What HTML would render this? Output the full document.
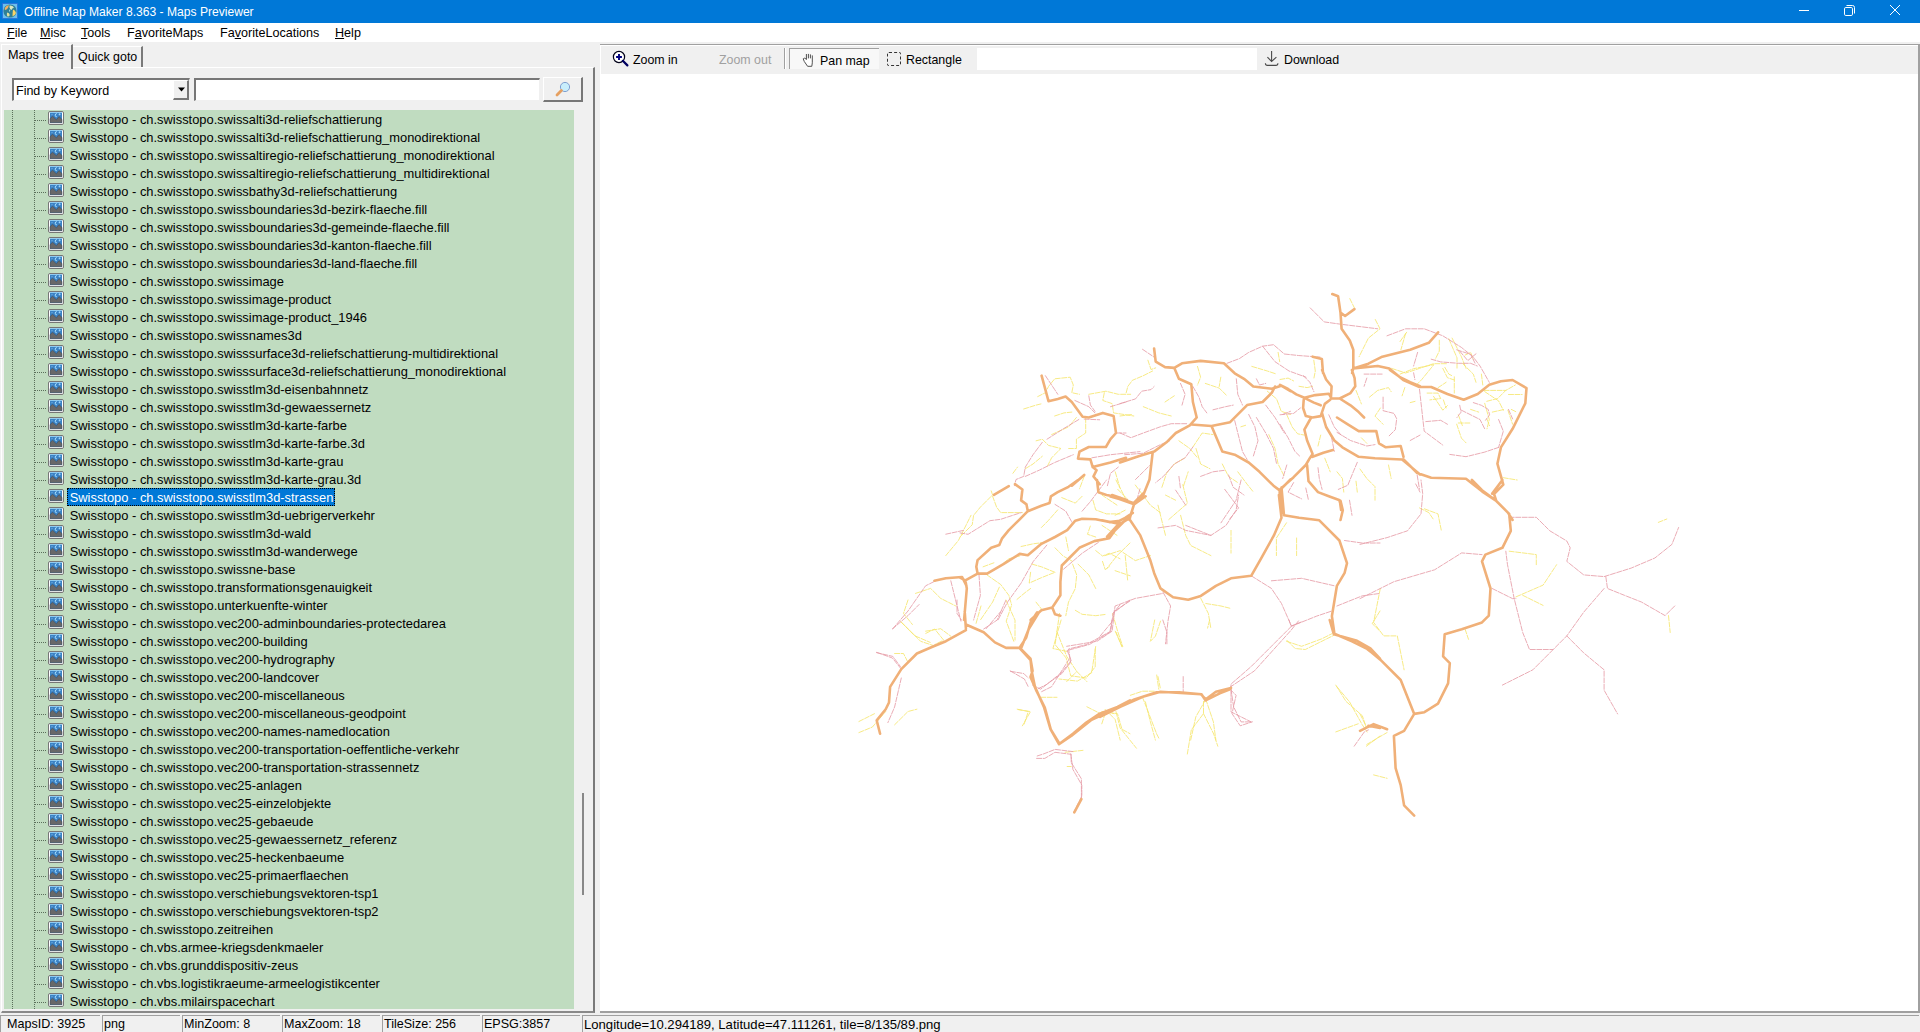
<!DOCTYPE html>
<html><head><meta charset="utf-8">
<style>
*{margin:0;padding:0;box-sizing:border-box}
html,body{width:1920px;height:1032px;overflow:hidden;background:#f0f0f0;font-family:"Liberation Sans",sans-serif;color:#000}
.a{position:absolute}
.tb{position:absolute;left:0;top:0;width:1920px;height:23px;background:#0078d7}
.ttl{position:absolute;left:24px;top:5px;font-size:12.1px;color:#fff;white-space:nowrap;line-height:14px}
.menu{position:absolute;left:0;top:23px;width:1920px;height:19px;background:#fff}
.mi{position:absolute;top:2px;font-size:12.6px;line-height:17px;white-space:nowrap}
.mi u{text-decoration:underline;text-underline-offset:0.5px;text-decoration-thickness:1px}
.t{position:absolute;left:67px;height:18px;font-size:12.9px;line-height:20px;white-space:nowrap;padding:0 2px 0 2.7px}
.t.sel{background:#0078d7;color:#fff;outline:1px dotted #000;outline-offset:-1px}
.ic{position:absolute;left:48px;width:16px;height:15px}
.hd{position:absolute;left:35px;width:12px;height:1px;background-image:linear-gradient(90deg,#5a6e5a 50%,transparent 50%);background-size:2px 1px}
.vd{position:absolute;width:1px;background-image:linear-gradient(180deg,#5a6e5a 50%,transparent 50%);background-size:1px 2px}
.sp{position:absolute;top:1015px;height:17px;border-top:1px solid #a0a0a0;border-left:1px solid #a0a0a0;font-size:12.55px;line-height:17px;white-space:nowrap;padding-left:1px}
.tbt{position:absolute;font-size:12.4px;line-height:15px;white-space:nowrap}
</style></head><body>
<div class="tb"></div>
<svg class="a" style="left:2px;top:3px" width="16" height="16" viewBox="0 0 16 16"><rect x="0.5" y="0.5" width="15" height="15" fill="#6cc0ee" stroke="#2a6fd8" stroke-width="0.8"/><circle cx="8" cy="8" r="6.6" fill="#2f7f96"/><path d="M2.5 6 Q3.5 2.5 7 2.3 Q6.5 5 4.5 6.5 Q3.5 7.5 2.5 6Z" fill="#f0b062"/><path d="M7.5 2.5 Q10.5 2.2 12 4.5 Q10 5 9.5 7 Q8 6.5 7.5 4.5Z" fill="#d8e8c0"/><path d="M11 6.5 Q13.5 7 14 10 Q13 13 10.5 13.5 Q10.5 10 11 6.5Z" fill="#f8d468"/><path d="M5 9.5 Q7.5 9.5 7.8 12 Q7 14 5.5 13.5 Q4.5 11.5 5 9.5Z" fill="#e0e0a0"/><path d="M7.5 6 Q9 8 7.5 9 Q6.5 8 7.5 6Z" fill="#9fd8e8"/></svg>
<div class="ttl">Offline Map Maker 8.363 - Maps Previewer</div>
<svg class="a" style="left:1790px;top:0" width="130" height="22"><line x1="9" y1="10.5" x2="19" y2="10.5" stroke="#fff" stroke-width="1"/><rect x="54.5" y="7.5" width="8" height="8" rx="1.3" fill="none" stroke="#fff"/><path d="M56.5 5.5 H62.5 Q64.5 5.5 64.5 7.5 V13.5" fill="none" stroke="#fff"/><path d="M100 5 L110 15 M110 5 L100 15" stroke="#fff" stroke-width="1"/></svg>
<div class="menu"></div>
<div class="mi" style="left:7px;top:25px"><u>F</u>ile</div>
<div class="mi" style="left:40px;top:25px"><u>M</u>isc</div>
<div class="mi" style="left:81px;top:25px"><u>T</u>ools</div>
<div class="mi" style="left:127px;top:25px">F<u>a</u>voriteMaps</div>
<div class="mi" style="left:220px;top:25px">Fa<u>v</u>oriteLocations</div>
<div class="mi" style="left:335px;top:25px"><u>H</u>elp</div>

<!-- left tab panel -->
<div class="a" style="left:1px;top:67px;width:594px;height:946px;border-left:1px solid #fff;border-top:1px solid #fff;border-right:2px solid #7a7a7a;border-bottom:2px solid #8a8a8a;background:#f0f0f0"></div>
<div class="a" style="left:1px;top:44px;width:72px;height:25px;background:#f0f0f0;border-left:1px solid #fff;border-top:1px solid #fff;border-right:2px solid #7a7a7a"></div>
<div class="a" style="left:8px;top:47.5px;font-size:12.65px;line-height:15px">Maps tree</div>
<div class="a" style="left:73px;top:46px;width:70px;height:21px;border-top:1px solid #fff;border-right:2px solid #7a7a7a"></div>
<div class="a" style="left:78px;top:50px;font-size:12.4px;line-height:15px">Quick goto</div>

<div class="a" style="left:12px;top:78px;width:178px;height:23px;background:#fff;border-top:2px solid #777;border-left:2px solid #777;border-right:1px solid #f0f0f0;border-bottom:1px solid #f0f0f0"></div>
<div class="a" style="left:16px;top:84px;font-size:12.5px;line-height:15px">Find by Keyword</div>
<div class="a" style="left:173px;top:80px;width:16px;height:20px;background:#f0f0f0;border-top:1px solid #fff;border-left:1px solid #fff;border-right:2px solid #777;border-bottom:2px solid #777"></div>
<svg class="a" style="left:178px;top:87px" width="8" height="6"><path d="M0 0.5 H7 L3.5 4.5Z" fill="#000"/></svg>
<div class="a" style="left:194px;top:78px;width:346px;height:23px;background:#fff;border-top:2px solid #777;border-left:2px solid #777;border-right:1px solid #f0f0f0;border-bottom:1px solid #f0f0f0"></div>
<div class="a" style="left:543px;top:77px;width:40px;height:25px;background:#f0f0f0;border-top:1px solid #fff;border-left:1px solid #fff;border-right:2px solid #777;border-bottom:2px solid #777"></div>
<svg class="a" style="left:554px;top:81px" width="18" height="17"><circle cx="11" cy="6" r="4.6" fill="#c8eefc" stroke="#7f9fd0" stroke-width="1"/><line x1="7.4" y1="9.6" x2="3" y2="14" stroke="#e6a060" stroke-width="2.8" stroke-linecap="round"/></svg>

<div class="a" style="left:4px;top:110px;width:570px;height:899px;background:#c0dcc0"></div>
<div class="vd" style="left:12px;top:110px;height:899px"></div>
<div class="vd" style="left:34px;top:110px;height:899px"></div>
<div class="a" style="left:574px;top:110px;width:19px;height:899px;background:#f0f0f0"></div>
<div class="a" style="left:582px;top:793px;width:2px;height:102px;background:#888"></div>
<div class="a" style="left:48px;top:111px;width:16px;height:15px"><svg width="16" height="15" viewBox="0 0 16 15"><rect x="0.5" y="0.5" width="15" height="13" rx="1.5" fill="#fff" stroke="#767676"/><rect x="2" y="1" width="12" height="10.8" fill="#3a82c4"/><rect x="2" y="1" width="12" height="0.9" fill="#9ad4f6"/><path d="M2 11.8 V7.6 L4.6 5.2 L8.4 8.8 L11 5.6 L14 8.4 V11.8Z" fill="#686868" stroke="#34465a" stroke-width="0.5"/><path d="M4 3.2 L4.6 3.8 L4 4.4 L3.4 3.8Z" fill="#a8dcff"/><path d="M8.8 2.6 A1.6 1.6 0 1 0 8.8 5.8" stroke="#a8e0ff" stroke-width="1" fill="none"/><path d="M11.6 2.3 V4.3 M10.6 3.3 H12.6" stroke="#a8dcff" stroke-width="0.8"/></svg></div><div class="hd" style="top:120px"></div><div class="t" style="top:110px">Swisstopo - ch.swisstopo.swissalti3d-reliefschattierung</div>
<div class="a" style="left:48px;top:129px;width:16px;height:15px"><svg width="16" height="15" viewBox="0 0 16 15"><rect x="0.5" y="0.5" width="15" height="13" rx="1.5" fill="#fff" stroke="#767676"/><rect x="2" y="1" width="12" height="10.8" fill="#3a82c4"/><rect x="2" y="1" width="12" height="0.9" fill="#9ad4f6"/><path d="M2 11.8 V7.6 L4.6 5.2 L8.4 8.8 L11 5.6 L14 8.4 V11.8Z" fill="#686868" stroke="#34465a" stroke-width="0.5"/><path d="M4 3.2 L4.6 3.8 L4 4.4 L3.4 3.8Z" fill="#a8dcff"/><path d="M8.8 2.6 A1.6 1.6 0 1 0 8.8 5.8" stroke="#a8e0ff" stroke-width="1" fill="none"/><path d="M11.6 2.3 V4.3 M10.6 3.3 H12.6" stroke="#a8dcff" stroke-width="0.8"/></svg></div><div class="hd" style="top:138px"></div><div class="t" style="top:128px">Swisstopo - ch.swisstopo.swissalti3d-reliefschattierung_monodirektional</div>
<div class="a" style="left:48px;top:147px;width:16px;height:15px"><svg width="16" height="15" viewBox="0 0 16 15"><rect x="0.5" y="0.5" width="15" height="13" rx="1.5" fill="#fff" stroke="#767676"/><rect x="2" y="1" width="12" height="10.8" fill="#3a82c4"/><rect x="2" y="1" width="12" height="0.9" fill="#9ad4f6"/><path d="M2 11.8 V7.6 L4.6 5.2 L8.4 8.8 L11 5.6 L14 8.4 V11.8Z" fill="#686868" stroke="#34465a" stroke-width="0.5"/><path d="M4 3.2 L4.6 3.8 L4 4.4 L3.4 3.8Z" fill="#a8dcff"/><path d="M8.8 2.6 A1.6 1.6 0 1 0 8.8 5.8" stroke="#a8e0ff" stroke-width="1" fill="none"/><path d="M11.6 2.3 V4.3 M10.6 3.3 H12.6" stroke="#a8dcff" stroke-width="0.8"/></svg></div><div class="hd" style="top:156px"></div><div class="t" style="top:146px">Swisstopo - ch.swisstopo.swissaltiregio-reliefschattierung_monodirektional</div>
<div class="a" style="left:48px;top:165px;width:16px;height:15px"><svg width="16" height="15" viewBox="0 0 16 15"><rect x="0.5" y="0.5" width="15" height="13" rx="1.5" fill="#fff" stroke="#767676"/><rect x="2" y="1" width="12" height="10.8" fill="#3a82c4"/><rect x="2" y="1" width="12" height="0.9" fill="#9ad4f6"/><path d="M2 11.8 V7.6 L4.6 5.2 L8.4 8.8 L11 5.6 L14 8.4 V11.8Z" fill="#686868" stroke="#34465a" stroke-width="0.5"/><path d="M4 3.2 L4.6 3.8 L4 4.4 L3.4 3.8Z" fill="#a8dcff"/><path d="M8.8 2.6 A1.6 1.6 0 1 0 8.8 5.8" stroke="#a8e0ff" stroke-width="1" fill="none"/><path d="M11.6 2.3 V4.3 M10.6 3.3 H12.6" stroke="#a8dcff" stroke-width="0.8"/></svg></div><div class="hd" style="top:174px"></div><div class="t" style="top:164px">Swisstopo - ch.swisstopo.swissaltiregio-reliefschattierung_multidirektional</div>
<div class="a" style="left:48px;top:183px;width:16px;height:15px"><svg width="16" height="15" viewBox="0 0 16 15"><rect x="0.5" y="0.5" width="15" height="13" rx="1.5" fill="#fff" stroke="#767676"/><rect x="2" y="1" width="12" height="10.8" fill="#3a82c4"/><rect x="2" y="1" width="12" height="0.9" fill="#9ad4f6"/><path d="M2 11.8 V7.6 L4.6 5.2 L8.4 8.8 L11 5.6 L14 8.4 V11.8Z" fill="#686868" stroke="#34465a" stroke-width="0.5"/><path d="M4 3.2 L4.6 3.8 L4 4.4 L3.4 3.8Z" fill="#a8dcff"/><path d="M8.8 2.6 A1.6 1.6 0 1 0 8.8 5.8" stroke="#a8e0ff" stroke-width="1" fill="none"/><path d="M11.6 2.3 V4.3 M10.6 3.3 H12.6" stroke="#a8dcff" stroke-width="0.8"/></svg></div><div class="hd" style="top:192px"></div><div class="t" style="top:182px">Swisstopo - ch.swisstopo.swissbathy3d-reliefschattierung</div>
<div class="a" style="left:48px;top:201px;width:16px;height:15px"><svg width="16" height="15" viewBox="0 0 16 15"><rect x="0.5" y="0.5" width="15" height="13" rx="1.5" fill="#fff" stroke="#767676"/><rect x="2" y="1" width="12" height="10.8" fill="#3a82c4"/><rect x="2" y="1" width="12" height="0.9" fill="#9ad4f6"/><path d="M2 11.8 V7.6 L4.6 5.2 L8.4 8.8 L11 5.6 L14 8.4 V11.8Z" fill="#686868" stroke="#34465a" stroke-width="0.5"/><path d="M4 3.2 L4.6 3.8 L4 4.4 L3.4 3.8Z" fill="#a8dcff"/><path d="M8.8 2.6 A1.6 1.6 0 1 0 8.8 5.8" stroke="#a8e0ff" stroke-width="1" fill="none"/><path d="M11.6 2.3 V4.3 M10.6 3.3 H12.6" stroke="#a8dcff" stroke-width="0.8"/></svg></div><div class="hd" style="top:210px"></div><div class="t" style="top:200px">Swisstopo - ch.swisstopo.swissboundaries3d-bezirk-flaeche.fill</div>
<div class="a" style="left:48px;top:219px;width:16px;height:15px"><svg width="16" height="15" viewBox="0 0 16 15"><rect x="0.5" y="0.5" width="15" height="13" rx="1.5" fill="#fff" stroke="#767676"/><rect x="2" y="1" width="12" height="10.8" fill="#3a82c4"/><rect x="2" y="1" width="12" height="0.9" fill="#9ad4f6"/><path d="M2 11.8 V7.6 L4.6 5.2 L8.4 8.8 L11 5.6 L14 8.4 V11.8Z" fill="#686868" stroke="#34465a" stroke-width="0.5"/><path d="M4 3.2 L4.6 3.8 L4 4.4 L3.4 3.8Z" fill="#a8dcff"/><path d="M8.8 2.6 A1.6 1.6 0 1 0 8.8 5.8" stroke="#a8e0ff" stroke-width="1" fill="none"/><path d="M11.6 2.3 V4.3 M10.6 3.3 H12.6" stroke="#a8dcff" stroke-width="0.8"/></svg></div><div class="hd" style="top:228px"></div><div class="t" style="top:218px">Swisstopo - ch.swisstopo.swissboundaries3d-gemeinde-flaeche.fill</div>
<div class="a" style="left:48px;top:237px;width:16px;height:15px"><svg width="16" height="15" viewBox="0 0 16 15"><rect x="0.5" y="0.5" width="15" height="13" rx="1.5" fill="#fff" stroke="#767676"/><rect x="2" y="1" width="12" height="10.8" fill="#3a82c4"/><rect x="2" y="1" width="12" height="0.9" fill="#9ad4f6"/><path d="M2 11.8 V7.6 L4.6 5.2 L8.4 8.8 L11 5.6 L14 8.4 V11.8Z" fill="#686868" stroke="#34465a" stroke-width="0.5"/><path d="M4 3.2 L4.6 3.8 L4 4.4 L3.4 3.8Z" fill="#a8dcff"/><path d="M8.8 2.6 A1.6 1.6 0 1 0 8.8 5.8" stroke="#a8e0ff" stroke-width="1" fill="none"/><path d="M11.6 2.3 V4.3 M10.6 3.3 H12.6" stroke="#a8dcff" stroke-width="0.8"/></svg></div><div class="hd" style="top:246px"></div><div class="t" style="top:236px">Swisstopo - ch.swisstopo.swissboundaries3d-kanton-flaeche.fill</div>
<div class="a" style="left:48px;top:255px;width:16px;height:15px"><svg width="16" height="15" viewBox="0 0 16 15"><rect x="0.5" y="0.5" width="15" height="13" rx="1.5" fill="#fff" stroke="#767676"/><rect x="2" y="1" width="12" height="10.8" fill="#3a82c4"/><rect x="2" y="1" width="12" height="0.9" fill="#9ad4f6"/><path d="M2 11.8 V7.6 L4.6 5.2 L8.4 8.8 L11 5.6 L14 8.4 V11.8Z" fill="#686868" stroke="#34465a" stroke-width="0.5"/><path d="M4 3.2 L4.6 3.8 L4 4.4 L3.4 3.8Z" fill="#a8dcff"/><path d="M8.8 2.6 A1.6 1.6 0 1 0 8.8 5.8" stroke="#a8e0ff" stroke-width="1" fill="none"/><path d="M11.6 2.3 V4.3 M10.6 3.3 H12.6" stroke="#a8dcff" stroke-width="0.8"/></svg></div><div class="hd" style="top:264px"></div><div class="t" style="top:254px">Swisstopo - ch.swisstopo.swissboundaries3d-land-flaeche.fill</div>
<div class="a" style="left:48px;top:273px;width:16px;height:15px"><svg width="16" height="15" viewBox="0 0 16 15"><rect x="0.5" y="0.5" width="15" height="13" rx="1.5" fill="#fff" stroke="#767676"/><rect x="2" y="1" width="12" height="10.8" fill="#3a82c4"/><rect x="2" y="1" width="12" height="0.9" fill="#9ad4f6"/><path d="M2 11.8 V7.6 L4.6 5.2 L8.4 8.8 L11 5.6 L14 8.4 V11.8Z" fill="#686868" stroke="#34465a" stroke-width="0.5"/><path d="M4 3.2 L4.6 3.8 L4 4.4 L3.4 3.8Z" fill="#a8dcff"/><path d="M8.8 2.6 A1.6 1.6 0 1 0 8.8 5.8" stroke="#a8e0ff" stroke-width="1" fill="none"/><path d="M11.6 2.3 V4.3 M10.6 3.3 H12.6" stroke="#a8dcff" stroke-width="0.8"/></svg></div><div class="hd" style="top:282px"></div><div class="t" style="top:272px">Swisstopo - ch.swisstopo.swissimage</div>
<div class="a" style="left:48px;top:291px;width:16px;height:15px"><svg width="16" height="15" viewBox="0 0 16 15"><rect x="0.5" y="0.5" width="15" height="13" rx="1.5" fill="#fff" stroke="#767676"/><rect x="2" y="1" width="12" height="10.8" fill="#3a82c4"/><rect x="2" y="1" width="12" height="0.9" fill="#9ad4f6"/><path d="M2 11.8 V7.6 L4.6 5.2 L8.4 8.8 L11 5.6 L14 8.4 V11.8Z" fill="#686868" stroke="#34465a" stroke-width="0.5"/><path d="M4 3.2 L4.6 3.8 L4 4.4 L3.4 3.8Z" fill="#a8dcff"/><path d="M8.8 2.6 A1.6 1.6 0 1 0 8.8 5.8" stroke="#a8e0ff" stroke-width="1" fill="none"/><path d="M11.6 2.3 V4.3 M10.6 3.3 H12.6" stroke="#a8dcff" stroke-width="0.8"/></svg></div><div class="hd" style="top:300px"></div><div class="t" style="top:290px">Swisstopo - ch.swisstopo.swissimage-product</div>
<div class="a" style="left:48px;top:309px;width:16px;height:15px"><svg width="16" height="15" viewBox="0 0 16 15"><rect x="0.5" y="0.5" width="15" height="13" rx="1.5" fill="#fff" stroke="#767676"/><rect x="2" y="1" width="12" height="10.8" fill="#3a82c4"/><rect x="2" y="1" width="12" height="0.9" fill="#9ad4f6"/><path d="M2 11.8 V7.6 L4.6 5.2 L8.4 8.8 L11 5.6 L14 8.4 V11.8Z" fill="#686868" stroke="#34465a" stroke-width="0.5"/><path d="M4 3.2 L4.6 3.8 L4 4.4 L3.4 3.8Z" fill="#a8dcff"/><path d="M8.8 2.6 A1.6 1.6 0 1 0 8.8 5.8" stroke="#a8e0ff" stroke-width="1" fill="none"/><path d="M11.6 2.3 V4.3 M10.6 3.3 H12.6" stroke="#a8dcff" stroke-width="0.8"/></svg></div><div class="hd" style="top:318px"></div><div class="t" style="top:308px">Swisstopo - ch.swisstopo.swissimage-product_1946</div>
<div class="a" style="left:48px;top:327px;width:16px;height:15px"><svg width="16" height="15" viewBox="0 0 16 15"><rect x="0.5" y="0.5" width="15" height="13" rx="1.5" fill="#fff" stroke="#767676"/><rect x="2" y="1" width="12" height="10.8" fill="#3a82c4"/><rect x="2" y="1" width="12" height="0.9" fill="#9ad4f6"/><path d="M2 11.8 V7.6 L4.6 5.2 L8.4 8.8 L11 5.6 L14 8.4 V11.8Z" fill="#686868" stroke="#34465a" stroke-width="0.5"/><path d="M4 3.2 L4.6 3.8 L4 4.4 L3.4 3.8Z" fill="#a8dcff"/><path d="M8.8 2.6 A1.6 1.6 0 1 0 8.8 5.8" stroke="#a8e0ff" stroke-width="1" fill="none"/><path d="M11.6 2.3 V4.3 M10.6 3.3 H12.6" stroke="#a8dcff" stroke-width="0.8"/></svg></div><div class="hd" style="top:336px"></div><div class="t" style="top:326px">Swisstopo - ch.swisstopo.swissnames3d</div>
<div class="a" style="left:48px;top:345px;width:16px;height:15px"><svg width="16" height="15" viewBox="0 0 16 15"><rect x="0.5" y="0.5" width="15" height="13" rx="1.5" fill="#fff" stroke="#767676"/><rect x="2" y="1" width="12" height="10.8" fill="#3a82c4"/><rect x="2" y="1" width="12" height="0.9" fill="#9ad4f6"/><path d="M2 11.8 V7.6 L4.6 5.2 L8.4 8.8 L11 5.6 L14 8.4 V11.8Z" fill="#686868" stroke="#34465a" stroke-width="0.5"/><path d="M4 3.2 L4.6 3.8 L4 4.4 L3.4 3.8Z" fill="#a8dcff"/><path d="M8.8 2.6 A1.6 1.6 0 1 0 8.8 5.8" stroke="#a8e0ff" stroke-width="1" fill="none"/><path d="M11.6 2.3 V4.3 M10.6 3.3 H12.6" stroke="#a8dcff" stroke-width="0.8"/></svg></div><div class="hd" style="top:354px"></div><div class="t" style="top:344px">Swisstopo - ch.swisstopo.swisssurface3d-reliefschattierung-multidirektional</div>
<div class="a" style="left:48px;top:363px;width:16px;height:15px"><svg width="16" height="15" viewBox="0 0 16 15"><rect x="0.5" y="0.5" width="15" height="13" rx="1.5" fill="#fff" stroke="#767676"/><rect x="2" y="1" width="12" height="10.8" fill="#3a82c4"/><rect x="2" y="1" width="12" height="0.9" fill="#9ad4f6"/><path d="M2 11.8 V7.6 L4.6 5.2 L8.4 8.8 L11 5.6 L14 8.4 V11.8Z" fill="#686868" stroke="#34465a" stroke-width="0.5"/><path d="M4 3.2 L4.6 3.8 L4 4.4 L3.4 3.8Z" fill="#a8dcff"/><path d="M8.8 2.6 A1.6 1.6 0 1 0 8.8 5.8" stroke="#a8e0ff" stroke-width="1" fill="none"/><path d="M11.6 2.3 V4.3 M10.6 3.3 H12.6" stroke="#a8dcff" stroke-width="0.8"/></svg></div><div class="hd" style="top:372px"></div><div class="t" style="top:362px">Swisstopo - ch.swisstopo.swisssurface3d-reliefschattierung_monodirektional</div>
<div class="a" style="left:48px;top:381px;width:16px;height:15px"><svg width="16" height="15" viewBox="0 0 16 15"><rect x="0.5" y="0.5" width="15" height="13" rx="1.5" fill="#fff" stroke="#767676"/><rect x="2" y="1" width="12" height="10.8" fill="#3a82c4"/><rect x="2" y="1" width="12" height="0.9" fill="#9ad4f6"/><path d="M2 11.8 V7.6 L4.6 5.2 L8.4 8.8 L11 5.6 L14 8.4 V11.8Z" fill="#686868" stroke="#34465a" stroke-width="0.5"/><path d="M4 3.2 L4.6 3.8 L4 4.4 L3.4 3.8Z" fill="#a8dcff"/><path d="M8.8 2.6 A1.6 1.6 0 1 0 8.8 5.8" stroke="#a8e0ff" stroke-width="1" fill="none"/><path d="M11.6 2.3 V4.3 M10.6 3.3 H12.6" stroke="#a8dcff" stroke-width="0.8"/></svg></div><div class="hd" style="top:390px"></div><div class="t" style="top:380px">Swisstopo - ch.swisstopo.swisstlm3d-eisenbahnnetz</div>
<div class="a" style="left:48px;top:399px;width:16px;height:15px"><svg width="16" height="15" viewBox="0 0 16 15"><rect x="0.5" y="0.5" width="15" height="13" rx="1.5" fill="#fff" stroke="#767676"/><rect x="2" y="1" width="12" height="10.8" fill="#3a82c4"/><rect x="2" y="1" width="12" height="0.9" fill="#9ad4f6"/><path d="M2 11.8 V7.6 L4.6 5.2 L8.4 8.8 L11 5.6 L14 8.4 V11.8Z" fill="#686868" stroke="#34465a" stroke-width="0.5"/><path d="M4 3.2 L4.6 3.8 L4 4.4 L3.4 3.8Z" fill="#a8dcff"/><path d="M8.8 2.6 A1.6 1.6 0 1 0 8.8 5.8" stroke="#a8e0ff" stroke-width="1" fill="none"/><path d="M11.6 2.3 V4.3 M10.6 3.3 H12.6" stroke="#a8dcff" stroke-width="0.8"/></svg></div><div class="hd" style="top:408px"></div><div class="t" style="top:398px">Swisstopo - ch.swisstopo.swisstlm3d-gewaessernetz</div>
<div class="a" style="left:48px;top:417px;width:16px;height:15px"><svg width="16" height="15" viewBox="0 0 16 15"><rect x="0.5" y="0.5" width="15" height="13" rx="1.5" fill="#fff" stroke="#767676"/><rect x="2" y="1" width="12" height="10.8" fill="#3a82c4"/><rect x="2" y="1" width="12" height="0.9" fill="#9ad4f6"/><path d="M2 11.8 V7.6 L4.6 5.2 L8.4 8.8 L11 5.6 L14 8.4 V11.8Z" fill="#686868" stroke="#34465a" stroke-width="0.5"/><path d="M4 3.2 L4.6 3.8 L4 4.4 L3.4 3.8Z" fill="#a8dcff"/><path d="M8.8 2.6 A1.6 1.6 0 1 0 8.8 5.8" stroke="#a8e0ff" stroke-width="1" fill="none"/><path d="M11.6 2.3 V4.3 M10.6 3.3 H12.6" stroke="#a8dcff" stroke-width="0.8"/></svg></div><div class="hd" style="top:426px"></div><div class="t" style="top:416px">Swisstopo - ch.swisstopo.swisstlm3d-karte-farbe</div>
<div class="a" style="left:48px;top:435px;width:16px;height:15px"><svg width="16" height="15" viewBox="0 0 16 15"><rect x="0.5" y="0.5" width="15" height="13" rx="1.5" fill="#fff" stroke="#767676"/><rect x="2" y="1" width="12" height="10.8" fill="#3a82c4"/><rect x="2" y="1" width="12" height="0.9" fill="#9ad4f6"/><path d="M2 11.8 V7.6 L4.6 5.2 L8.4 8.8 L11 5.6 L14 8.4 V11.8Z" fill="#686868" stroke="#34465a" stroke-width="0.5"/><path d="M4 3.2 L4.6 3.8 L4 4.4 L3.4 3.8Z" fill="#a8dcff"/><path d="M8.8 2.6 A1.6 1.6 0 1 0 8.8 5.8" stroke="#a8e0ff" stroke-width="1" fill="none"/><path d="M11.6 2.3 V4.3 M10.6 3.3 H12.6" stroke="#a8dcff" stroke-width="0.8"/></svg></div><div class="hd" style="top:444px"></div><div class="t" style="top:434px">Swisstopo - ch.swisstopo.swisstlm3d-karte-farbe.3d</div>
<div class="a" style="left:48px;top:453px;width:16px;height:15px"><svg width="16" height="15" viewBox="0 0 16 15"><rect x="0.5" y="0.5" width="15" height="13" rx="1.5" fill="#fff" stroke="#767676"/><rect x="2" y="1" width="12" height="10.8" fill="#3a82c4"/><rect x="2" y="1" width="12" height="0.9" fill="#9ad4f6"/><path d="M2 11.8 V7.6 L4.6 5.2 L8.4 8.8 L11 5.6 L14 8.4 V11.8Z" fill="#686868" stroke="#34465a" stroke-width="0.5"/><path d="M4 3.2 L4.6 3.8 L4 4.4 L3.4 3.8Z" fill="#a8dcff"/><path d="M8.8 2.6 A1.6 1.6 0 1 0 8.8 5.8" stroke="#a8e0ff" stroke-width="1" fill="none"/><path d="M11.6 2.3 V4.3 M10.6 3.3 H12.6" stroke="#a8dcff" stroke-width="0.8"/></svg></div><div class="hd" style="top:462px"></div><div class="t" style="top:452px">Swisstopo - ch.swisstopo.swisstlm3d-karte-grau</div>
<div class="a" style="left:48px;top:471px;width:16px;height:15px"><svg width="16" height="15" viewBox="0 0 16 15"><rect x="0.5" y="0.5" width="15" height="13" rx="1.5" fill="#fff" stroke="#767676"/><rect x="2" y="1" width="12" height="10.8" fill="#3a82c4"/><rect x="2" y="1" width="12" height="0.9" fill="#9ad4f6"/><path d="M2 11.8 V7.6 L4.6 5.2 L8.4 8.8 L11 5.6 L14 8.4 V11.8Z" fill="#686868" stroke="#34465a" stroke-width="0.5"/><path d="M4 3.2 L4.6 3.8 L4 4.4 L3.4 3.8Z" fill="#a8dcff"/><path d="M8.8 2.6 A1.6 1.6 0 1 0 8.8 5.8" stroke="#a8e0ff" stroke-width="1" fill="none"/><path d="M11.6 2.3 V4.3 M10.6 3.3 H12.6" stroke="#a8dcff" stroke-width="0.8"/></svg></div><div class="hd" style="top:480px"></div><div class="t" style="top:470px">Swisstopo - ch.swisstopo.swisstlm3d-karte-grau.3d</div>
<div class="a" style="left:48px;top:489px;width:16px;height:15px"><svg width="16" height="15" viewBox="0 0 16 15"><rect x="0.5" y="0.5" width="15" height="13" rx="1.5" fill="#fff" stroke="#767676"/><rect x="2" y="1" width="12" height="10.8" fill="#3a82c4"/><rect x="2" y="1" width="12" height="0.9" fill="#9ad4f6"/><path d="M2 11.8 V7.6 L4.6 5.2 L8.4 8.8 L11 5.6 L14 8.4 V11.8Z" fill="#686868" stroke="#34465a" stroke-width="0.5"/><path d="M4 3.2 L4.6 3.8 L4 4.4 L3.4 3.8Z" fill="#a8dcff"/><path d="M8.8 2.6 A1.6 1.6 0 1 0 8.8 5.8" stroke="#a8e0ff" stroke-width="1" fill="none"/><path d="M11.6 2.3 V4.3 M10.6 3.3 H12.6" stroke="#a8dcff" stroke-width="0.8"/></svg></div><div class="hd" style="top:498px"></div><div class="t sel" style="top:488px">Swisstopo - ch.swisstopo.swisstlm3d-strassen</div>
<div class="a" style="left:48px;top:507px;width:16px;height:15px"><svg width="16" height="15" viewBox="0 0 16 15"><rect x="0.5" y="0.5" width="15" height="13" rx="1.5" fill="#fff" stroke="#767676"/><rect x="2" y="1" width="12" height="10.8" fill="#3a82c4"/><rect x="2" y="1" width="12" height="0.9" fill="#9ad4f6"/><path d="M2 11.8 V7.6 L4.6 5.2 L8.4 8.8 L11 5.6 L14 8.4 V11.8Z" fill="#686868" stroke="#34465a" stroke-width="0.5"/><path d="M4 3.2 L4.6 3.8 L4 4.4 L3.4 3.8Z" fill="#a8dcff"/><path d="M8.8 2.6 A1.6 1.6 0 1 0 8.8 5.8" stroke="#a8e0ff" stroke-width="1" fill="none"/><path d="M11.6 2.3 V4.3 M10.6 3.3 H12.6" stroke="#a8dcff" stroke-width="0.8"/></svg></div><div class="hd" style="top:516px"></div><div class="t" style="top:506px">Swisstopo - ch.swisstopo.swisstlm3d-uebrigerverkehr</div>
<div class="a" style="left:48px;top:525px;width:16px;height:15px"><svg width="16" height="15" viewBox="0 0 16 15"><rect x="0.5" y="0.5" width="15" height="13" rx="1.5" fill="#fff" stroke="#767676"/><rect x="2" y="1" width="12" height="10.8" fill="#3a82c4"/><rect x="2" y="1" width="12" height="0.9" fill="#9ad4f6"/><path d="M2 11.8 V7.6 L4.6 5.2 L8.4 8.8 L11 5.6 L14 8.4 V11.8Z" fill="#686868" stroke="#34465a" stroke-width="0.5"/><path d="M4 3.2 L4.6 3.8 L4 4.4 L3.4 3.8Z" fill="#a8dcff"/><path d="M8.8 2.6 A1.6 1.6 0 1 0 8.8 5.8" stroke="#a8e0ff" stroke-width="1" fill="none"/><path d="M11.6 2.3 V4.3 M10.6 3.3 H12.6" stroke="#a8dcff" stroke-width="0.8"/></svg></div><div class="hd" style="top:534px"></div><div class="t" style="top:524px">Swisstopo - ch.swisstopo.swisstlm3d-wald</div>
<div class="a" style="left:48px;top:543px;width:16px;height:15px"><svg width="16" height="15" viewBox="0 0 16 15"><rect x="0.5" y="0.5" width="15" height="13" rx="1.5" fill="#fff" stroke="#767676"/><rect x="2" y="1" width="12" height="10.8" fill="#3a82c4"/><rect x="2" y="1" width="12" height="0.9" fill="#9ad4f6"/><path d="M2 11.8 V7.6 L4.6 5.2 L8.4 8.8 L11 5.6 L14 8.4 V11.8Z" fill="#686868" stroke="#34465a" stroke-width="0.5"/><path d="M4 3.2 L4.6 3.8 L4 4.4 L3.4 3.8Z" fill="#a8dcff"/><path d="M8.8 2.6 A1.6 1.6 0 1 0 8.8 5.8" stroke="#a8e0ff" stroke-width="1" fill="none"/><path d="M11.6 2.3 V4.3 M10.6 3.3 H12.6" stroke="#a8dcff" stroke-width="0.8"/></svg></div><div class="hd" style="top:552px"></div><div class="t" style="top:542px">Swisstopo - ch.swisstopo.swisstlm3d-wanderwege</div>
<div class="a" style="left:48px;top:561px;width:16px;height:15px"><svg width="16" height="15" viewBox="0 0 16 15"><rect x="0.5" y="0.5" width="15" height="13" rx="1.5" fill="#fff" stroke="#767676"/><rect x="2" y="1" width="12" height="10.8" fill="#3a82c4"/><rect x="2" y="1" width="12" height="0.9" fill="#9ad4f6"/><path d="M2 11.8 V7.6 L4.6 5.2 L8.4 8.8 L11 5.6 L14 8.4 V11.8Z" fill="#686868" stroke="#34465a" stroke-width="0.5"/><path d="M4 3.2 L4.6 3.8 L4 4.4 L3.4 3.8Z" fill="#a8dcff"/><path d="M8.8 2.6 A1.6 1.6 0 1 0 8.8 5.8" stroke="#a8e0ff" stroke-width="1" fill="none"/><path d="M11.6 2.3 V4.3 M10.6 3.3 H12.6" stroke="#a8dcff" stroke-width="0.8"/></svg></div><div class="hd" style="top:570px"></div><div class="t" style="top:560px">Swisstopo - ch.swisstopo.swissne-base</div>
<div class="a" style="left:48px;top:579px;width:16px;height:15px"><svg width="16" height="15" viewBox="0 0 16 15"><rect x="0.5" y="0.5" width="15" height="13" rx="1.5" fill="#fff" stroke="#767676"/><rect x="2" y="1" width="12" height="10.8" fill="#3a82c4"/><rect x="2" y="1" width="12" height="0.9" fill="#9ad4f6"/><path d="M2 11.8 V7.6 L4.6 5.2 L8.4 8.8 L11 5.6 L14 8.4 V11.8Z" fill="#686868" stroke="#34465a" stroke-width="0.5"/><path d="M4 3.2 L4.6 3.8 L4 4.4 L3.4 3.8Z" fill="#a8dcff"/><path d="M8.8 2.6 A1.6 1.6 0 1 0 8.8 5.8" stroke="#a8e0ff" stroke-width="1" fill="none"/><path d="M11.6 2.3 V4.3 M10.6 3.3 H12.6" stroke="#a8dcff" stroke-width="0.8"/></svg></div><div class="hd" style="top:588px"></div><div class="t" style="top:578px">Swisstopo - ch.swisstopo.transformationsgenauigkeit</div>
<div class="a" style="left:48px;top:597px;width:16px;height:15px"><svg width="16" height="15" viewBox="0 0 16 15"><rect x="0.5" y="0.5" width="15" height="13" rx="1.5" fill="#fff" stroke="#767676"/><rect x="2" y="1" width="12" height="10.8" fill="#3a82c4"/><rect x="2" y="1" width="12" height="0.9" fill="#9ad4f6"/><path d="M2 11.8 V7.6 L4.6 5.2 L8.4 8.8 L11 5.6 L14 8.4 V11.8Z" fill="#686868" stroke="#34465a" stroke-width="0.5"/><path d="M4 3.2 L4.6 3.8 L4 4.4 L3.4 3.8Z" fill="#a8dcff"/><path d="M8.8 2.6 A1.6 1.6 0 1 0 8.8 5.8" stroke="#a8e0ff" stroke-width="1" fill="none"/><path d="M11.6 2.3 V4.3 M10.6 3.3 H12.6" stroke="#a8dcff" stroke-width="0.8"/></svg></div><div class="hd" style="top:606px"></div><div class="t" style="top:596px">Swisstopo - ch.swisstopo.unterkuenfte-winter</div>
<div class="a" style="left:48px;top:615px;width:16px;height:15px"><svg width="16" height="15" viewBox="0 0 16 15"><rect x="0.5" y="0.5" width="15" height="13" rx="1.5" fill="#fff" stroke="#767676"/><rect x="2" y="1" width="12" height="10.8" fill="#3a82c4"/><rect x="2" y="1" width="12" height="0.9" fill="#9ad4f6"/><path d="M2 11.8 V7.6 L4.6 5.2 L8.4 8.8 L11 5.6 L14 8.4 V11.8Z" fill="#686868" stroke="#34465a" stroke-width="0.5"/><path d="M4 3.2 L4.6 3.8 L4 4.4 L3.4 3.8Z" fill="#a8dcff"/><path d="M8.8 2.6 A1.6 1.6 0 1 0 8.8 5.8" stroke="#a8e0ff" stroke-width="1" fill="none"/><path d="M11.6 2.3 V4.3 M10.6 3.3 H12.6" stroke="#a8dcff" stroke-width="0.8"/></svg></div><div class="hd" style="top:624px"></div><div class="t" style="top:614px">Swisstopo - ch.swisstopo.vec200-adminboundaries-protectedarea</div>
<div class="a" style="left:48px;top:633px;width:16px;height:15px"><svg width="16" height="15" viewBox="0 0 16 15"><rect x="0.5" y="0.5" width="15" height="13" rx="1.5" fill="#fff" stroke="#767676"/><rect x="2" y="1" width="12" height="10.8" fill="#3a82c4"/><rect x="2" y="1" width="12" height="0.9" fill="#9ad4f6"/><path d="M2 11.8 V7.6 L4.6 5.2 L8.4 8.8 L11 5.6 L14 8.4 V11.8Z" fill="#686868" stroke="#34465a" stroke-width="0.5"/><path d="M4 3.2 L4.6 3.8 L4 4.4 L3.4 3.8Z" fill="#a8dcff"/><path d="M8.8 2.6 A1.6 1.6 0 1 0 8.8 5.8" stroke="#a8e0ff" stroke-width="1" fill="none"/><path d="M11.6 2.3 V4.3 M10.6 3.3 H12.6" stroke="#a8dcff" stroke-width="0.8"/></svg></div><div class="hd" style="top:642px"></div><div class="t" style="top:632px">Swisstopo - ch.swisstopo.vec200-building</div>
<div class="a" style="left:48px;top:651px;width:16px;height:15px"><svg width="16" height="15" viewBox="0 0 16 15"><rect x="0.5" y="0.5" width="15" height="13" rx="1.5" fill="#fff" stroke="#767676"/><rect x="2" y="1" width="12" height="10.8" fill="#3a82c4"/><rect x="2" y="1" width="12" height="0.9" fill="#9ad4f6"/><path d="M2 11.8 V7.6 L4.6 5.2 L8.4 8.8 L11 5.6 L14 8.4 V11.8Z" fill="#686868" stroke="#34465a" stroke-width="0.5"/><path d="M4 3.2 L4.6 3.8 L4 4.4 L3.4 3.8Z" fill="#a8dcff"/><path d="M8.8 2.6 A1.6 1.6 0 1 0 8.8 5.8" stroke="#a8e0ff" stroke-width="1" fill="none"/><path d="M11.6 2.3 V4.3 M10.6 3.3 H12.6" stroke="#a8dcff" stroke-width="0.8"/></svg></div><div class="hd" style="top:660px"></div><div class="t" style="top:650px">Swisstopo - ch.swisstopo.vec200-hydrography</div>
<div class="a" style="left:48px;top:669px;width:16px;height:15px"><svg width="16" height="15" viewBox="0 0 16 15"><rect x="0.5" y="0.5" width="15" height="13" rx="1.5" fill="#fff" stroke="#767676"/><rect x="2" y="1" width="12" height="10.8" fill="#3a82c4"/><rect x="2" y="1" width="12" height="0.9" fill="#9ad4f6"/><path d="M2 11.8 V7.6 L4.6 5.2 L8.4 8.8 L11 5.6 L14 8.4 V11.8Z" fill="#686868" stroke="#34465a" stroke-width="0.5"/><path d="M4 3.2 L4.6 3.8 L4 4.4 L3.4 3.8Z" fill="#a8dcff"/><path d="M8.8 2.6 A1.6 1.6 0 1 0 8.8 5.8" stroke="#a8e0ff" stroke-width="1" fill="none"/><path d="M11.6 2.3 V4.3 M10.6 3.3 H12.6" stroke="#a8dcff" stroke-width="0.8"/></svg></div><div class="hd" style="top:678px"></div><div class="t" style="top:668px">Swisstopo - ch.swisstopo.vec200-landcover</div>
<div class="a" style="left:48px;top:687px;width:16px;height:15px"><svg width="16" height="15" viewBox="0 0 16 15"><rect x="0.5" y="0.5" width="15" height="13" rx="1.5" fill="#fff" stroke="#767676"/><rect x="2" y="1" width="12" height="10.8" fill="#3a82c4"/><rect x="2" y="1" width="12" height="0.9" fill="#9ad4f6"/><path d="M2 11.8 V7.6 L4.6 5.2 L8.4 8.8 L11 5.6 L14 8.4 V11.8Z" fill="#686868" stroke="#34465a" stroke-width="0.5"/><path d="M4 3.2 L4.6 3.8 L4 4.4 L3.4 3.8Z" fill="#a8dcff"/><path d="M8.8 2.6 A1.6 1.6 0 1 0 8.8 5.8" stroke="#a8e0ff" stroke-width="1" fill="none"/><path d="M11.6 2.3 V4.3 M10.6 3.3 H12.6" stroke="#a8dcff" stroke-width="0.8"/></svg></div><div class="hd" style="top:696px"></div><div class="t" style="top:686px">Swisstopo - ch.swisstopo.vec200-miscellaneous</div>
<div class="a" style="left:48px;top:705px;width:16px;height:15px"><svg width="16" height="15" viewBox="0 0 16 15"><rect x="0.5" y="0.5" width="15" height="13" rx="1.5" fill="#fff" stroke="#767676"/><rect x="2" y="1" width="12" height="10.8" fill="#3a82c4"/><rect x="2" y="1" width="12" height="0.9" fill="#9ad4f6"/><path d="M2 11.8 V7.6 L4.6 5.2 L8.4 8.8 L11 5.6 L14 8.4 V11.8Z" fill="#686868" stroke="#34465a" stroke-width="0.5"/><path d="M4 3.2 L4.6 3.8 L4 4.4 L3.4 3.8Z" fill="#a8dcff"/><path d="M8.8 2.6 A1.6 1.6 0 1 0 8.8 5.8" stroke="#a8e0ff" stroke-width="1" fill="none"/><path d="M11.6 2.3 V4.3 M10.6 3.3 H12.6" stroke="#a8dcff" stroke-width="0.8"/></svg></div><div class="hd" style="top:714px"></div><div class="t" style="top:704px">Swisstopo - ch.swisstopo.vec200-miscellaneous-geodpoint</div>
<div class="a" style="left:48px;top:723px;width:16px;height:15px"><svg width="16" height="15" viewBox="0 0 16 15"><rect x="0.5" y="0.5" width="15" height="13" rx="1.5" fill="#fff" stroke="#767676"/><rect x="2" y="1" width="12" height="10.8" fill="#3a82c4"/><rect x="2" y="1" width="12" height="0.9" fill="#9ad4f6"/><path d="M2 11.8 V7.6 L4.6 5.2 L8.4 8.8 L11 5.6 L14 8.4 V11.8Z" fill="#686868" stroke="#34465a" stroke-width="0.5"/><path d="M4 3.2 L4.6 3.8 L4 4.4 L3.4 3.8Z" fill="#a8dcff"/><path d="M8.8 2.6 A1.6 1.6 0 1 0 8.8 5.8" stroke="#a8e0ff" stroke-width="1" fill="none"/><path d="M11.6 2.3 V4.3 M10.6 3.3 H12.6" stroke="#a8dcff" stroke-width="0.8"/></svg></div><div class="hd" style="top:732px"></div><div class="t" style="top:722px">Swisstopo - ch.swisstopo.vec200-names-namedlocation</div>
<div class="a" style="left:48px;top:741px;width:16px;height:15px"><svg width="16" height="15" viewBox="0 0 16 15"><rect x="0.5" y="0.5" width="15" height="13" rx="1.5" fill="#fff" stroke="#767676"/><rect x="2" y="1" width="12" height="10.8" fill="#3a82c4"/><rect x="2" y="1" width="12" height="0.9" fill="#9ad4f6"/><path d="M2 11.8 V7.6 L4.6 5.2 L8.4 8.8 L11 5.6 L14 8.4 V11.8Z" fill="#686868" stroke="#34465a" stroke-width="0.5"/><path d="M4 3.2 L4.6 3.8 L4 4.4 L3.4 3.8Z" fill="#a8dcff"/><path d="M8.8 2.6 A1.6 1.6 0 1 0 8.8 5.8" stroke="#a8e0ff" stroke-width="1" fill="none"/><path d="M11.6 2.3 V4.3 M10.6 3.3 H12.6" stroke="#a8dcff" stroke-width="0.8"/></svg></div><div class="hd" style="top:750px"></div><div class="t" style="top:740px">Swisstopo - ch.swisstopo.vec200-transportation-oeffentliche-verkehr</div>
<div class="a" style="left:48px;top:759px;width:16px;height:15px"><svg width="16" height="15" viewBox="0 0 16 15"><rect x="0.5" y="0.5" width="15" height="13" rx="1.5" fill="#fff" stroke="#767676"/><rect x="2" y="1" width="12" height="10.8" fill="#3a82c4"/><rect x="2" y="1" width="12" height="0.9" fill="#9ad4f6"/><path d="M2 11.8 V7.6 L4.6 5.2 L8.4 8.8 L11 5.6 L14 8.4 V11.8Z" fill="#686868" stroke="#34465a" stroke-width="0.5"/><path d="M4 3.2 L4.6 3.8 L4 4.4 L3.4 3.8Z" fill="#a8dcff"/><path d="M8.8 2.6 A1.6 1.6 0 1 0 8.8 5.8" stroke="#a8e0ff" stroke-width="1" fill="none"/><path d="M11.6 2.3 V4.3 M10.6 3.3 H12.6" stroke="#a8dcff" stroke-width="0.8"/></svg></div><div class="hd" style="top:768px"></div><div class="t" style="top:758px">Swisstopo - ch.swisstopo.vec200-transportation-strassennetz</div>
<div class="a" style="left:48px;top:777px;width:16px;height:15px"><svg width="16" height="15" viewBox="0 0 16 15"><rect x="0.5" y="0.5" width="15" height="13" rx="1.5" fill="#fff" stroke="#767676"/><rect x="2" y="1" width="12" height="10.8" fill="#3a82c4"/><rect x="2" y="1" width="12" height="0.9" fill="#9ad4f6"/><path d="M2 11.8 V7.6 L4.6 5.2 L8.4 8.8 L11 5.6 L14 8.4 V11.8Z" fill="#686868" stroke="#34465a" stroke-width="0.5"/><path d="M4 3.2 L4.6 3.8 L4 4.4 L3.4 3.8Z" fill="#a8dcff"/><path d="M8.8 2.6 A1.6 1.6 0 1 0 8.8 5.8" stroke="#a8e0ff" stroke-width="1" fill="none"/><path d="M11.6 2.3 V4.3 M10.6 3.3 H12.6" stroke="#a8dcff" stroke-width="0.8"/></svg></div><div class="hd" style="top:786px"></div><div class="t" style="top:776px">Swisstopo - ch.swisstopo.vec25-anlagen</div>
<div class="a" style="left:48px;top:795px;width:16px;height:15px"><svg width="16" height="15" viewBox="0 0 16 15"><rect x="0.5" y="0.5" width="15" height="13" rx="1.5" fill="#fff" stroke="#767676"/><rect x="2" y="1" width="12" height="10.8" fill="#3a82c4"/><rect x="2" y="1" width="12" height="0.9" fill="#9ad4f6"/><path d="M2 11.8 V7.6 L4.6 5.2 L8.4 8.8 L11 5.6 L14 8.4 V11.8Z" fill="#686868" stroke="#34465a" stroke-width="0.5"/><path d="M4 3.2 L4.6 3.8 L4 4.4 L3.4 3.8Z" fill="#a8dcff"/><path d="M8.8 2.6 A1.6 1.6 0 1 0 8.8 5.8" stroke="#a8e0ff" stroke-width="1" fill="none"/><path d="M11.6 2.3 V4.3 M10.6 3.3 H12.6" stroke="#a8dcff" stroke-width="0.8"/></svg></div><div class="hd" style="top:804px"></div><div class="t" style="top:794px">Swisstopo - ch.swisstopo.vec25-einzelobjekte</div>
<div class="a" style="left:48px;top:813px;width:16px;height:15px"><svg width="16" height="15" viewBox="0 0 16 15"><rect x="0.5" y="0.5" width="15" height="13" rx="1.5" fill="#fff" stroke="#767676"/><rect x="2" y="1" width="12" height="10.8" fill="#3a82c4"/><rect x="2" y="1" width="12" height="0.9" fill="#9ad4f6"/><path d="M2 11.8 V7.6 L4.6 5.2 L8.4 8.8 L11 5.6 L14 8.4 V11.8Z" fill="#686868" stroke="#34465a" stroke-width="0.5"/><path d="M4 3.2 L4.6 3.8 L4 4.4 L3.4 3.8Z" fill="#a8dcff"/><path d="M8.8 2.6 A1.6 1.6 0 1 0 8.8 5.8" stroke="#a8e0ff" stroke-width="1" fill="none"/><path d="M11.6 2.3 V4.3 M10.6 3.3 H12.6" stroke="#a8dcff" stroke-width="0.8"/></svg></div><div class="hd" style="top:822px"></div><div class="t" style="top:812px">Swisstopo - ch.swisstopo.vec25-gebaeude</div>
<div class="a" style="left:48px;top:831px;width:16px;height:15px"><svg width="16" height="15" viewBox="0 0 16 15"><rect x="0.5" y="0.5" width="15" height="13" rx="1.5" fill="#fff" stroke="#767676"/><rect x="2" y="1" width="12" height="10.8" fill="#3a82c4"/><rect x="2" y="1" width="12" height="0.9" fill="#9ad4f6"/><path d="M2 11.8 V7.6 L4.6 5.2 L8.4 8.8 L11 5.6 L14 8.4 V11.8Z" fill="#686868" stroke="#34465a" stroke-width="0.5"/><path d="M4 3.2 L4.6 3.8 L4 4.4 L3.4 3.8Z" fill="#a8dcff"/><path d="M8.8 2.6 A1.6 1.6 0 1 0 8.8 5.8" stroke="#a8e0ff" stroke-width="1" fill="none"/><path d="M11.6 2.3 V4.3 M10.6 3.3 H12.6" stroke="#a8dcff" stroke-width="0.8"/></svg></div><div class="hd" style="top:840px"></div><div class="t" style="top:830px">Swisstopo - ch.swisstopo.vec25-gewaessernetz_referenz</div>
<div class="a" style="left:48px;top:849px;width:16px;height:15px"><svg width="16" height="15" viewBox="0 0 16 15"><rect x="0.5" y="0.5" width="15" height="13" rx="1.5" fill="#fff" stroke="#767676"/><rect x="2" y="1" width="12" height="10.8" fill="#3a82c4"/><rect x="2" y="1" width="12" height="0.9" fill="#9ad4f6"/><path d="M2 11.8 V7.6 L4.6 5.2 L8.4 8.8 L11 5.6 L14 8.4 V11.8Z" fill="#686868" stroke="#34465a" stroke-width="0.5"/><path d="M4 3.2 L4.6 3.8 L4 4.4 L3.4 3.8Z" fill="#a8dcff"/><path d="M8.8 2.6 A1.6 1.6 0 1 0 8.8 5.8" stroke="#a8e0ff" stroke-width="1" fill="none"/><path d="M11.6 2.3 V4.3 M10.6 3.3 H12.6" stroke="#a8dcff" stroke-width="0.8"/></svg></div><div class="hd" style="top:858px"></div><div class="t" style="top:848px">Swisstopo - ch.swisstopo.vec25-heckenbaeume</div>
<div class="a" style="left:48px;top:867px;width:16px;height:15px"><svg width="16" height="15" viewBox="0 0 16 15"><rect x="0.5" y="0.5" width="15" height="13" rx="1.5" fill="#fff" stroke="#767676"/><rect x="2" y="1" width="12" height="10.8" fill="#3a82c4"/><rect x="2" y="1" width="12" height="0.9" fill="#9ad4f6"/><path d="M2 11.8 V7.6 L4.6 5.2 L8.4 8.8 L11 5.6 L14 8.4 V11.8Z" fill="#686868" stroke="#34465a" stroke-width="0.5"/><path d="M4 3.2 L4.6 3.8 L4 4.4 L3.4 3.8Z" fill="#a8dcff"/><path d="M8.8 2.6 A1.6 1.6 0 1 0 8.8 5.8" stroke="#a8e0ff" stroke-width="1" fill="none"/><path d="M11.6 2.3 V4.3 M10.6 3.3 H12.6" stroke="#a8dcff" stroke-width="0.8"/></svg></div><div class="hd" style="top:876px"></div><div class="t" style="top:866px">Swisstopo - ch.swisstopo.vec25-primaerflaechen</div>
<div class="a" style="left:48px;top:885px;width:16px;height:15px"><svg width="16" height="15" viewBox="0 0 16 15"><rect x="0.5" y="0.5" width="15" height="13" rx="1.5" fill="#fff" stroke="#767676"/><rect x="2" y="1" width="12" height="10.8" fill="#3a82c4"/><rect x="2" y="1" width="12" height="0.9" fill="#9ad4f6"/><path d="M2 11.8 V7.6 L4.6 5.2 L8.4 8.8 L11 5.6 L14 8.4 V11.8Z" fill="#686868" stroke="#34465a" stroke-width="0.5"/><path d="M4 3.2 L4.6 3.8 L4 4.4 L3.4 3.8Z" fill="#a8dcff"/><path d="M8.8 2.6 A1.6 1.6 0 1 0 8.8 5.8" stroke="#a8e0ff" stroke-width="1" fill="none"/><path d="M11.6 2.3 V4.3 M10.6 3.3 H12.6" stroke="#a8dcff" stroke-width="0.8"/></svg></div><div class="hd" style="top:894px"></div><div class="t" style="top:884px">Swisstopo - ch.swisstopo.verschiebungsvektoren-tsp1</div>
<div class="a" style="left:48px;top:903px;width:16px;height:15px"><svg width="16" height="15" viewBox="0 0 16 15"><rect x="0.5" y="0.5" width="15" height="13" rx="1.5" fill="#fff" stroke="#767676"/><rect x="2" y="1" width="12" height="10.8" fill="#3a82c4"/><rect x="2" y="1" width="12" height="0.9" fill="#9ad4f6"/><path d="M2 11.8 V7.6 L4.6 5.2 L8.4 8.8 L11 5.6 L14 8.4 V11.8Z" fill="#686868" stroke="#34465a" stroke-width="0.5"/><path d="M4 3.2 L4.6 3.8 L4 4.4 L3.4 3.8Z" fill="#a8dcff"/><path d="M8.8 2.6 A1.6 1.6 0 1 0 8.8 5.8" stroke="#a8e0ff" stroke-width="1" fill="none"/><path d="M11.6 2.3 V4.3 M10.6 3.3 H12.6" stroke="#a8dcff" stroke-width="0.8"/></svg></div><div class="hd" style="top:912px"></div><div class="t" style="top:902px">Swisstopo - ch.swisstopo.verschiebungsvektoren-tsp2</div>
<div class="a" style="left:48px;top:921px;width:16px;height:15px"><svg width="16" height="15" viewBox="0 0 16 15"><rect x="0.5" y="0.5" width="15" height="13" rx="1.5" fill="#fff" stroke="#767676"/><rect x="2" y="1" width="12" height="10.8" fill="#3a82c4"/><rect x="2" y="1" width="12" height="0.9" fill="#9ad4f6"/><path d="M2 11.8 V7.6 L4.6 5.2 L8.4 8.8 L11 5.6 L14 8.4 V11.8Z" fill="#686868" stroke="#34465a" stroke-width="0.5"/><path d="M4 3.2 L4.6 3.8 L4 4.4 L3.4 3.8Z" fill="#a8dcff"/><path d="M8.8 2.6 A1.6 1.6 0 1 0 8.8 5.8" stroke="#a8e0ff" stroke-width="1" fill="none"/><path d="M11.6 2.3 V4.3 M10.6 3.3 H12.6" stroke="#a8dcff" stroke-width="0.8"/></svg></div><div class="hd" style="top:930px"></div><div class="t" style="top:920px">Swisstopo - ch.swisstopo.zeitreihen</div>
<div class="a" style="left:48px;top:939px;width:16px;height:15px"><svg width="16" height="15" viewBox="0 0 16 15"><rect x="0.5" y="0.5" width="15" height="13" rx="1.5" fill="#fff" stroke="#767676"/><rect x="2" y="1" width="12" height="10.8" fill="#3a82c4"/><rect x="2" y="1" width="12" height="0.9" fill="#9ad4f6"/><path d="M2 11.8 V7.6 L4.6 5.2 L8.4 8.8 L11 5.6 L14 8.4 V11.8Z" fill="#686868" stroke="#34465a" stroke-width="0.5"/><path d="M4 3.2 L4.6 3.8 L4 4.4 L3.4 3.8Z" fill="#a8dcff"/><path d="M8.8 2.6 A1.6 1.6 0 1 0 8.8 5.8" stroke="#a8e0ff" stroke-width="1" fill="none"/><path d="M11.6 2.3 V4.3 M10.6 3.3 H12.6" stroke="#a8dcff" stroke-width="0.8"/></svg></div><div class="hd" style="top:948px"></div><div class="t" style="top:938px">Swisstopo - ch.vbs.armee-kriegsdenkmaeler</div>
<div class="a" style="left:48px;top:957px;width:16px;height:15px"><svg width="16" height="15" viewBox="0 0 16 15"><rect x="0.5" y="0.5" width="15" height="13" rx="1.5" fill="#fff" stroke="#767676"/><rect x="2" y="1" width="12" height="10.8" fill="#3a82c4"/><rect x="2" y="1" width="12" height="0.9" fill="#9ad4f6"/><path d="M2 11.8 V7.6 L4.6 5.2 L8.4 8.8 L11 5.6 L14 8.4 V11.8Z" fill="#686868" stroke="#34465a" stroke-width="0.5"/><path d="M4 3.2 L4.6 3.8 L4 4.4 L3.4 3.8Z" fill="#a8dcff"/><path d="M8.8 2.6 A1.6 1.6 0 1 0 8.8 5.8" stroke="#a8e0ff" stroke-width="1" fill="none"/><path d="M11.6 2.3 V4.3 M10.6 3.3 H12.6" stroke="#a8dcff" stroke-width="0.8"/></svg></div><div class="hd" style="top:966px"></div><div class="t" style="top:956px">Swisstopo - ch.vbs.grunddispositiv-zeus</div>
<div class="a" style="left:48px;top:975px;width:16px;height:15px"><svg width="16" height="15" viewBox="0 0 16 15"><rect x="0.5" y="0.5" width="15" height="13" rx="1.5" fill="#fff" stroke="#767676"/><rect x="2" y="1" width="12" height="10.8" fill="#3a82c4"/><rect x="2" y="1" width="12" height="0.9" fill="#9ad4f6"/><path d="M2 11.8 V7.6 L4.6 5.2 L8.4 8.8 L11 5.6 L14 8.4 V11.8Z" fill="#686868" stroke="#34465a" stroke-width="0.5"/><path d="M4 3.2 L4.6 3.8 L4 4.4 L3.4 3.8Z" fill="#a8dcff"/><path d="M8.8 2.6 A1.6 1.6 0 1 0 8.8 5.8" stroke="#a8e0ff" stroke-width="1" fill="none"/><path d="M11.6 2.3 V4.3 M10.6 3.3 H12.6" stroke="#a8dcff" stroke-width="0.8"/></svg></div><div class="hd" style="top:984px"></div><div class="t" style="top:974px">Swisstopo - ch.vbs.logistikraeume-armeelogistikcenter</div>
<div class="a" style="left:48px;top:993px;width:16px;height:15px"><svg width="16" height="15" viewBox="0 0 16 15"><rect x="0.5" y="0.5" width="15" height="13" rx="1.5" fill="#fff" stroke="#767676"/><rect x="2" y="1" width="12" height="10.8" fill="#3a82c4"/><rect x="2" y="1" width="12" height="0.9" fill="#9ad4f6"/><path d="M2 11.8 V7.6 L4.6 5.2 L8.4 8.8 L11 5.6 L14 8.4 V11.8Z" fill="#686868" stroke="#34465a" stroke-width="0.5"/><path d="M4 3.2 L4.6 3.8 L4 4.4 L3.4 3.8Z" fill="#a8dcff"/><path d="M8.8 2.6 A1.6 1.6 0 1 0 8.8 5.8" stroke="#a8e0ff" stroke-width="1" fill="none"/><path d="M11.6 2.3 V4.3 M10.6 3.3 H12.6" stroke="#a8dcff" stroke-width="0.8"/></svg></div><div class="hd" style="top:1002px"></div><div class="t" style="top:992px">Swisstopo - ch.vbs.milairspacechart</div>

<!-- map area -->
<div class="a" style="left:600px;top:44px;width:1320px;height:969px;background:#fff;border-top:1px solid #a0a0a0;border-right:2px solid #a0a0a0;border-bottom:2px solid #a0a0a0"></div>
<div class="a" style="left:601px;top:45px;width:1317px;height:29px;background:#f0f0f0;border-top:1px solid #fff"></div>
<svg class="a" style="left:612px;top:50px" width="18" height="18"><circle cx="7" cy="7" r="5.6" fill="#fff" stroke="#000018" stroke-width="1.2"/><path d="M7 4.1 V9.9 M4.1 7 H9.9" stroke="#000080" stroke-width="1.9"/><line x1="10.8" y1="10.8" x2="15.4" y2="15.4" stroke="#000060" stroke-width="2.2" stroke-linecap="round"/></svg>
<div class="tbt" style="left:633px;top:53px">Zoom in</div>
<div class="tbt" style="left:719px;top:53px;color:#a0a0a0">Zoom out</div>
<div class="a" style="left:784px;top:48px;width:2px;height:21px;border-left:1px solid #a0a0a0;border-right:1px solid #fff"></div>
<div class="a" style="left:789px;top:48px;width:90px;height:21px;background:#f8f8f8;border-top:1px solid #a0a0a0;border-left:1px solid #a0a0a0"></div>
<svg class="a" style="left:798px;top:50px" width="20" height="20"><path d="M8.4 9 V4.4 M10.4 8 V4.3 M12.4 8 V4.8 M14.3 5.8 V12.8 L13.8 16.3 H9.6 L6.3 11.5 L5.2 8.8 L6.6 8.2 L8.4 9.2" fill="#fff" stroke="#505050" stroke-width="1" stroke-linecap="round" stroke-linejoin="round"/></svg>
<div class="tbt" style="left:820px;top:53.5px">Pan map</div>
<div class="a" style="left:887px;top:52px;width:14px;height:14px;border:1.2px dashed #333;border-radius:2px"></div>
<div class="tbt" style="left:906px;top:52.5px">Rectangle</div>
<div class="a" style="left:977px;top:48px;width:280px;height:22px;background:#fff"></div>
<svg class="a" style="left:1264px;top:50px" width="16" height="17"><path d="M7.6 1 V11.4 M3.4 7.2 L7.6 11.5 L12.4 7.2" stroke="#4a4a4a" stroke-width="1.1" fill="none"/><path d="M1.4 13.2 Q1.4 15.4 3.4 15.4 H11.9 Q13.9 15.4 13.9 13.2" stroke="#4a4a4a" stroke-width="1.1" fill="none"/></svg>
<div class="tbt" style="left:1284px;top:52.5px">Download</div>
<svg class="a" style="left:0;top:0" width="1920" height="1032" viewBox="0 0 1920 1032">
<path d="M858.9 732.6 L872.3 727.1 L885.7 711.5 M858.9 721.5 L874.5 713.7 M894.6 724.8 L908.0 711.5 L916.9 709.2 M894.6 653.5 L903.5 653.5 L908.0 662.4 M901.3 622.3 L914.6 635.7 L930.2 642.4 M925.8 633.4 L934.7 629.0 L943.6 640.1 L934.7 644.6 M908.0 600.0 L903.5 613.4 L912.4 624.5 M1006.0 600.0 L1015.0 620.1 L1015.0 640.1 M1059.5 613.4 L1055.1 644.6 L1066.2 658.0 L1070.7 675.8 L1086.3 678.0 L1095.2 666.9 L1095.2 649.0 M1115.3 631.2 L1122.0 646.8 M1017.2 709.2 L1028.3 711.5 L1023.9 724.8 M1101.9 711.5 L1117.5 713.7 L1122.0 729.3 L1130.0 733.7 M945.8 555.6 L958.4 540.5 L971.0 515.3 M900.4 621.1 L910.5 631.2 L920.6 641.3 L935.7 646.3 M925.6 631.2 L940.7 628.7 L950.8 636.2 M915.5 593.4 L930.6 588.4 L940.7 598.4 L955.8 606.0 M981.0 606.0 L976.0 623.6 M1011.3 606.0 L1006.2 621.1 L1013.8 641.3 M1056.7 631.2 L1066.7 656.4 L1076.8 671.5 L1086.9 681.6 M1066.7 681.6 L1076.8 671.5 M1086.9 706.8 L1102.0 714.4 M1102.0 495.1 L1117.1 505.2 M1102.0 525.4 L1117.1 535.4 M1130.0 543.0 L1117.1 555.6 L1107.1 568.2 M1117.7 489.3 L1127.0 498.6 M1182.8 484.7 L1187.4 503.3 L1168.8 519.5 M1349.8 298.6 L1354.4 307.9 M1375.3 319.5 L1380.0 328.8 L1368.4 338.1 L1359.1 356.7 M1405.6 333.5 L1400.9 349.8 M1452.1 338.1 L1461.4 356.7 L1466.0 368.4 M1391.6 368.4 L1405.6 373.0 L1419.5 368.4 L1433.5 363.7 L1447.4 363.7 M1442.8 368.4 L1447.4 377.7 L1454.4 380.0 M1433.5 396.3 L1442.8 410.2 L1447.4 405.6 M1484.7 391.6 L1498.6 400.9 L1503.3 410.2 M1456.7 424.2 L1461.4 438.1 L1466.0 442.8 M1507.9 410.2 L1512.6 424.2 M1484.7 403.3 L1489.3 419.5 L1487.0 428.8 M1419.5 507.9 L1428.8 512.6 L1433.5 519.5 M1503.3 477.7 L1517.2 480.0 M1112.6 613.6 L1117.6 631.2 L1122.7 646.3 M1160.5 621.1 L1155.4 636.2 L1150.4 641.3 M1200.8 598.4 L1208.4 613.6 L1210.9 628.7 M1205.8 603.5 L1221.0 606.0 L1231.0 608.5 M1158.0 505.2 L1163.0 525.4 L1165.5 535.4 M1180.6 515.3 L1185.7 535.4 L1190.7 545.5 L1210.9 555.6 M1231.0 530.4 L1231.0 553.1 M1286.5 522.8 L1276.4 538.0 L1276.4 555.6 M1296.6 538.0 L1296.6 555.6 M1286.5 641.3 L1301.6 646.3 L1321.8 638.8 L1331.9 633.7 M1336.9 686.7 L1349.5 701.8 L1362.1 724.5 L1367.1 732.0 M1380.0 611.0 L1372.2 623.6 L1380.0 631.2 M1158.0 676.6 L1160.5 689.2 M1105.0 709.3 L1115.1 719.4 L1120.2 740.1 M1145.4 701.8 L1150.4 721.9 L1155.4 740.1 M1205.8 699.3 L1195.8 716.9 L1190.7 740.1 M1205.8 699.3 L1213.4 721.9 L1215.9 740.1 M1115.1 515.3 L1125.2 510.2 M1105.0 555.6 L1120.2 550.6 L1135.3 560.6 L1150.4 555.6 M1115.1 570.7 L1130.2 575.8 M1125.2 555.6 L1127.7 580.8 M1135.3 485.0 L1150.4 505.2 L1160.5 512.8 M1165.5 495.1 L1175.6 500.2 M1509.2 551.2 L1536.3 554.6 L1536.3 564.7 M1515.9 596.9 L1543.1 585.1 L1556.6 564.7 M1522.7 595.3 L1543.1 605.4 M1380.3 588.5 L1373.6 622.4 L1383.7 635.9 L1397.3 635.9 L1404.1 669.8 M1424.4 508.8 L1438.0 513.9 L1441.4 530.8 M1668.5 615.6 L1670.2 632.5 M1658.3 522.4 L1666.8 519.0 M1465.1 629.2 L1468.5 639.3 M1360.0 713.9 L1366.8 727.5 M1366.8 744.4 L1387.1 732.5 M1373.6 774.9 L1387.1 778.3 M1061.1 620.0 L1052.9 648.5 L1067.2 651.5 M1095.7 646.5 L1091.6 672.9 L1077.3 681.1 L1059.0 679.0 M1154.7 620.0 L1150.6 640.4 M1116.0 632.2 L1122.1 646.5 M1209.6 620.0 L1207.6 628.1 M1156.7 675.0 L1158.8 689.2 M1142.5 697.3 L1146.5 707.5 L1156.7 734.0 L1158.8 738.1 M1116.0 711.6 L1120.1 727.9 L1136.4 748.2 M1203.5 701.4 L1203.5 713.6 L1191.3 729.9 L1187.3 754.3 M1203.5 713.6 L1213.7 734.0 L1217.8 746.2 M1287.0 640.4 L1295.1 648.5 L1305.3 649.5 L1333.8 635.3 M1335.8 685.1 L1346.0 701.4 L1362.3 715.7 L1366.4 727.9 M1335.8 731.9 L1358.2 723.8 M1366.4 746.2 L1380.0 736.0 M1018.3 709.6 L1030.5 711.6 L1022.4 725.8 M1040.7 697.3 L1057.0 697.3 M1101.8 723.8 L1105.8 711.6 L1114.0 713.6 M1130.3 695.3 L1142.5 691.2 L1154.7 691.2 M1065.1 752.3 L1083.5 750.3 M1067.2 766.5 L1071.2 766.5 M1023.7 409.0 L1036.1 405.1 L1042.3 403.6 M1037.7 396.6 L1045.4 392.7 L1048.5 386.5 L1054.7 378.8 L1070.2 377.2 L1073.3 385.0 L1071.8 392.7 L1079.5 394.3 M1054.7 416.0 L1064.0 412.9 L1071.8 412.1 M1076.4 417.5 L1068.7 426.8 L1051.6 434.6 M1085.7 417.5 L1085.7 433.0 L1076.4 439.2 L1076.4 448.5 L1068.7 448.5 M1036.1 440.8 L1042.3 439.2 L1048.5 445.4 L1060.9 448.5 L1051.6 457.8 L1047.0 467.1 M1025.3 468.7 L1033.0 464.0 L1042.3 456.3 M1012.9 473.3 L1017.5 467.1 M1088.8 394.3 L1105.9 391.2 L1118.3 394.3 L1130.7 394.3 M1104.3 392.7 L1102.8 400.5 L1112.1 403.6 L1113.6 412.9 L1133.8 416.0 M1115.2 471.8 L1119.8 487.3 L1126.0 499.7 M1084.2 476.4 L1079.5 488.8 M1126.2 392.7 L1127.8 386.5 L1132.4 380.3 L1143.3 375.7 L1152.6 371.0 M1147.9 360.2 L1151.0 369.5 L1155.7 367.9 M1143.3 406.7 L1158.8 412.9 L1171.2 416.0 M1120.0 416.0 L1132.4 414.4 M1165.0 402.0 L1174.3 395.8 M1197.5 366.4 L1200.6 377.2 L1197.5 385.0 M1205.3 383.4 L1219.2 388.1 L1227.0 395.8 M1220.8 377.2 L1219.2 386.5 M1192.9 447.0 L1202.2 433.0 L1213.0 434.6 M1178.9 440.8 L1189.8 448.5 L1197.5 457.8 M1196.0 448.5 L1200.6 464.0 L1209.9 468.7 M1161.9 487.3 L1166.5 473.3 L1174.3 464.0 L1185.1 457.8 M1183.6 485.7 L1188.2 471.8 M1240.9 426.8 L1245.6 425.3 M1251.8 366.4 L1267.3 371.0 L1276.6 374.1 M1278.1 352.4 L1279.7 361.7 M1267.3 391.2 L1276.6 398.9 L1281.2 411.3 L1290.5 414.4 M1268.8 434.6 L1275.0 448.5 L1278.1 464.0 L1284.3 476.4 M1313.8 360.2 L1315.3 371.0 L1313.8 378.8 M1237.8 471.8 L1247.1 484.2 L1253.3 491.9 M1222.3 464.0 L1228.5 476.4 L1237.8 482.6 M1280.0 379.5 L1288.1 378.1 L1293.6 380.9 M1299.0 386.3 L1307.1 387.6 L1312.6 386.3 M1286.8 414.8 L1292.2 427.0 L1297.6 433.8 L1304.4 435.1 M1320.7 435.1 L1318.0 446.0 M1324.8 458.2 L1330.2 471.8 M1337.0 471.8 L1342.4 478.5 L1343.8 492.1 M1356.0 390.4 L1361.4 403.9 M1369.5 397.1 L1377.7 390.4 L1388.5 387.6 L1391.2 391.7 M1380.4 408.0 L1375.0 416.1 L1383.1 424.3 M1361.4 437.8 L1366.8 443.3 M1388.5 465.0 L1391.2 478.5 M1360.0 469.0 L1366.8 478.5 L1375.0 486.7 L1375.0 500.2 M1356.0 481.2 L1357.3 492.1 M1404.8 387.6 L1402.1 395.8 M1410.2 402.6 L1415.7 401.2 M991.2 490.9 L992.6 494.9 L980.4 507.1 L973.6 515.3 L972.2 524.8 L960.0 537.0 M992.6 496.3 L996.6 507.1 L1000.7 512.6 L1014.3 512.6 L1022.4 512.6 M1041.4 527.5 L1048.2 520.7 L1057.7 509.9 M1061.8 497.6 L1075.3 503.1 L1082.1 496.3 M1021.1 546.5 L1033.3 543.8 L1044.1 542.4 M983.1 566.8 L993.9 562.8 M987.1 575.0 L1000.7 584.5 L1008.8 595.3 L1011.6 604.8 M1019.7 556.0 L1008.8 558.7 L1000.7 565.5 M1031.9 564.1 L1041.4 566.8 L1055.0 572.3 M1030.6 572.3 L1029.2 583.1 L1041.4 577.7 L1055.0 572.3 M999.3 587.2 L992.6 602.1 L980.4 620.0 M1017.0 599.4 L1025.1 592.6 L1030.6 588.5 M1036.0 602.1 L1041.4 608.9 M1055.0 547.8 L1063.1 556.0 L1072.6 561.4 M1065.8 537.0 L1068.5 550.6 M1072.6 564.1 L1076.7 575.0 L1075.3 588.5 L1068.5 602.1 L1065.8 615.7 M1078.0 564.1 L1088.9 575.0 L1095.7 588.5 M1090.3 526.1 L1087.5 534.3 L1095.7 537.0 M1095.7 550.6 L1102.5 556.0 L1109.3 553.3 L1120.0 558.7 M1102.5 561.4 L1105.2 569.6 L1109.3 566.8 M1093.0 500.4 L1095.7 509.9 L1106.5 513.9 L1120.0 513.9 M1116.0 480.0 L1120.0 488.1 M1075.3 610.3 L1082.1 614.3 L1095.7 615.7 L1106.5 614.3 M1400.0 341.6 L1406.8 332.1 M1439.3 340.2 L1439.3 351.1 L1435.3 359.2 M1448.8 338.8 L1457.0 357.8 L1457.0 368.7 M1465.1 355.1 L1470.6 352.4 L1473.3 359.2 M1400.0 374.1 L1413.6 368.7 L1433.9 364.6 L1421.7 379.6 L1416.3 385.0 M1444.8 367.3 L1448.8 374.1 L1451.6 375.5 M1454.3 376.8 L1454.3 393.1 M1438.0 387.7 L1446.1 382.3 M1462.4 363.3 L1473.3 374.1 L1476.0 382.3 M1481.4 374.1 L1482.8 385.0 M1427.1 393.1 L1438.0 393.1 L1440.7 398.5 L1429.9 399.9 M1443.4 399.9 L1446.1 408.0 M1484.1 390.4 L1495.0 390.4 L1505.8 390.4 M1486.8 401.3 L1497.7 398.5 L1505.8 390.4 L1515.3 385.0 M1492.3 412.1 L1504.5 409.4 M1508.5 394.5 L1522.1 394.5 M1458.3 414.8 L1462.4 425.7 M1458.3 423.0 L1470.6 423.0 M1470.6 409.4 L1478.7 412.1 M1511.3 409.4 L1516.7 412.1 M1486.8 418.9 L1489.6 425.7" fill="none" stroke="#f6e670" stroke-width="1.0" stroke-linejoin="round" stroke-linecap="round" stroke-dasharray="5 1.5" opacity="0.85"/>
<path d="M876.7 652.4 L892.4 658.0 L901.3 669.1 M892.4 629.0 L908.0 615.6 L919.1 604.5 M901.3 678.0 L894.6 707.0 L887.9 722.6 M957.0 600.0 L957.0 613.4 L961.5 620.1 M983.7 629.0 L997.1 620.1 L1006.0 600.0 M1010.5 671.3 L1023.9 673.6 L1028.3 678.0 M1130.0 600.0 L1113.0 613.4 L1110.8 631.2 L1086.3 644.6 L1068.5 649.0 L1070.7 662.4 L1061.8 673.6 L1046.2 684.7 L1037.2 689.2 M1037.2 756.0 L1043.9 753.8 L1055.1 749.4 L1072.9 751.6 M1070.7 753.8 L1072.9 769.4 L1081.8 785.0 L1081.8 796.2 L1074.0 811.8 M945.8 534.2 L963.4 530.4 M892.8 628.7 L908.0 611.0 L925.6 585.8 L935.7 580.8 M876.5 652.6 L892.8 656.4 L900.4 666.5 M950.8 580.8 L955.8 601.0 L960.9 621.1 M986.1 628.7 L1001.2 611.0 M1130.0 601.0 L1114.6 611.0 L1112.1 631.2 L1097.0 641.3 L1066.7 646.3 M1069.3 658.9 L1051.6 686.7 L1041.5 691.7 M1224.7 489.3 L1238.6 507.9 L1229.3 519.5 M1419.5 389.3 L1424.2 431.2 L1442.8 445.1 M1310.2 307.9 L1324.2 321.9 L1340.5 324.2 L1377.7 328.8 M1387.0 335.8 L1405.6 328.8 L1424.2 328.8 L1442.8 335.8 L1461.4 347.4 L1473.0 356.7 L1480.0 366.0 L1489.3 382.3 M1456.7 349.8 L1470.7 354.4 L1475.3 363.7 M1461.4 410.2 L1480.0 419.5 L1484.7 428.8 M1449.8 454.4 L1466.0 456.7 L1484.7 452.1 L1498.6 447.4 M1417.2 475.3 L1419.5 489.3 M1498.6 419.5 L1503.3 431.2 L1498.6 447.4 M1163.0 592.1 L1170.6 606.0 L1168.0 621.1 L1165.5 643.8 M1100.0 636.2 L1112.6 621.1 L1115.1 606.0 L1135.3 598.4 L1163.0 593.4 M1158.0 527.9 L1175.6 525.4 L1185.7 530.4 L1210.9 535.4 M1185.7 525.4 L1210.9 535.4 L1226.0 525.4 L1236.1 510.2 L1238.6 495.1 M1251.2 575.8 L1271.4 588.4 L1281.5 603.5 L1291.5 626.2 L1316.7 616.1 L1331.9 611.0 M1291.5 626.2 L1271.4 646.3 L1251.2 666.5 L1231.0 684.1 L1231.0 711.9 L1251.2 721.9 M1271.4 580.8 L1301.6 578.3 L1334.4 585.8 M1336.9 606.0 L1362.1 595.9 L1380.0 593.4 M1344.5 540.5 L1362.1 543.0 L1380.0 543.0 M1183.2 676.6 L1183.2 691.7 M1231.0 689.2 L1233.6 706.8 L1241.1 721.9 L1251.2 721.9 M1241.1 480.0 L1236.1 500.2 L1221.0 522.8 M1175.6 490.1 L1185.7 505.2 M1349.5 500.2 L1352.0 515.3 M1509.2 517.3 L1536.3 517.3 L1549.8 530.8 L1566.8 541.0 L1570.2 547.8 L1566.8 561.4 L1583.7 574.9 L1604.1 576.6 L1631.2 568.1 L1654.9 558.0 L1671.9 544.4 L1678.6 527.5 M1605.8 576.6 L1607.5 588.5 L1624.4 595.3 L1641.4 602.0 L1665.1 615.6 L1675.3 605.4 M1604.1 588.5 L1583.7 612.2 L1566.8 635.9 L1553.2 649.5 L1529.5 649.5 L1522.7 632.5 L1514.2 598.6 L1507.5 564.7 L1505.8 551.2 M1566.8 635.9 L1583.7 652.9 L1604.1 669.8 L1604.1 690.2 L1617.6 713.9 M1553.2 649.5 L1532.9 669.8 L1502.4 685.1 M1360.0 544.4 L1387.1 537.6 L1407.5 530.8 L1421.0 513.9 L1422.7 493.6 L1421.0 480.0 M1360.0 598.6 L1393.9 581.7 L1434.6 569.8 L1461.7 552.9 L1482.0 554.6 M1492.2 588.5 L1512.5 598.6 L1515.9 598.6 M1360.0 730.8 L1373.6 724.1 M1230.0 687.2 L1254.4 670.9 L1291.1 630.2 L1299.2 620.0 M1230.0 689.2 L1236.1 695.3 L1232.0 713.6 L1240.2 725.8 L1252.4 721.8 M1111.9 620.0 L1109.9 632.2 L1089.6 644.4 L1067.2 650.5 L1071.2 660.7 L1061.1 672.9 L1040.7 689.2 L1032.6 685.1 M1162.8 620.0 L1166.9 632.2 L1166.9 644.4 M1010.2 670.9 L1024.4 679.0 L1028.5 687.2 M1036.6 758.4 L1044.8 758.4 L1055.0 752.3 L1071.2 754.3 L1071.2 762.5 L1081.4 778.8 L1081.4 799.1 M1289.0 620.0 L1291.1 626.1 L1301.2 622.0 M1354.2 746.2 L1364.3 731.9 L1368.4 729.9 M1045.4 375.7 L1054.7 389.6 L1057.8 394.3 M1074.9 400.5 L1088.8 406.7 L1095.0 412.9 M1088.8 395.8 L1090.4 405.1 L1095.0 411.3 M1110.5 406.7 L1126.0 402.0 M1084.2 419.1 L1099.7 419.8 M1047.0 439.2 L1064.0 428.4 L1079.5 419.1 M1042.3 442.3 L1033.0 454.7 L1025.3 467.1 L1023.7 476.4 L1016.0 479.5 L1014.4 485.7 M1025.3 476.4 L1039.2 470.2 L1054.7 462.5 L1073.3 454.7 M1091.9 457.8 L1110.5 454.7 L1140.0 451.6 M1116.7 433.0 L1126.0 433.0 M1136.9 500.0 L1140.0 488.8 M1107.4 485.7 L1110.5 473.3 L1118.3 467.1 M1142.5 349.3 L1154.1 357.1 M1120.0 403.6 L1135.5 398.9 L1141.7 391.2 L1151.0 389.6 L1154.1 386.5 M1120.0 433.0 L1130.9 437.7 L1143.3 433.0 L1160.3 426.8 L1171.2 423.7 L1186.7 423.7 M1124.7 454.7 L1143.3 453.2 L1158.8 445.4 L1169.6 440.8 M1180.5 383.4 L1185.1 394.3 L1182.0 405.1 M1192.9 386.5 L1199.1 397.4 L1202.2 406.7 L1206.8 412.9 M1227.0 363.3 L1239.4 358.6 L1248.7 352.4 L1262.6 346.2 L1273.5 344.7 L1284.3 354.0 L1298.3 355.5 L1320.0 357.1 M1262.6 346.2 L1268.8 354.0 L1275.0 361.7 L1289.0 371.0 L1306.0 377.2 M1236.3 378.8 L1237.8 394.3 L1242.5 405.1 M1256.4 378.8 L1259.5 385.0 L1265.7 383.4 M1234.7 420.6 L1237.8 433.0 L1242.5 451.6 L1247.1 459.4 M1248.7 414.4 L1254.9 426.8 L1258.0 440.8 L1253.3 456.3 M1256.4 417.5 L1265.7 433.0 L1273.5 448.5 L1276.6 464.0 M1265.7 405.1 L1275.0 417.5 L1284.3 433.0 M1282.8 414.4 L1290.5 411.3 M1192.9 447.0 L1185.1 457.8 L1174.3 464.0 L1163.4 476.4 L1155.7 482.6 M1135.5 479.5 L1143.3 471.8 L1149.5 465.6 M1200.6 476.4 L1213.0 471.8 L1225.4 470.2 M1228.5 474.9 L1233.2 487.3 L1244.0 495.0 M1178.9 476.4 L1180.5 488.8 M1213.0 409.8 L1225.4 406.7 L1233.2 405.1 M1303.1 375.4 L1309.8 382.2 L1313.9 391.7 M1280.0 414.8 L1293.6 413.4 L1300.4 408.0 M1280.0 424.3 L1288.1 437.8 L1294.9 451.4 L1300.4 456.8 M1328.8 414.8 L1334.3 427.0 L1341.1 435.1 M1337.0 432.4 L1350.5 440.5 L1366.8 446.0 L1375.0 444.6 M1326.1 425.6 L1331.6 437.8 L1334.3 451.4 M1364.1 374.1 L1383.1 374.1 M1366.8 378.1 L1364.1 386.3 M1383.1 397.1 L1383.1 410.7 L1394.0 413.4 L1396.7 418.8 L1395.3 429.7 L1388.5 436.5 M1410.2 440.5 L1420.0 435.1 M1357.3 462.3 L1353.3 471.8 L1347.8 485.3 L1338.3 489.4 M1318.0 467.7 L1319.3 478.5 L1322.1 489.4 M1286.8 465.0 L1282.7 478.5 M1293.6 482.6 L1288.1 492.1 L1301.7 498.9 M1305.8 488.0 L1308.5 500.2 M1415.7 484.0 L1420.0 492.1 M960.0 532.9 L968.1 534.3 L979.0 527.5 L989.9 520.7 L1000.7 519.3 L1021.1 512.6 M1055.0 504.4 L1065.8 511.2 L1072.6 523.4 M1082.1 511.2 L1090.3 501.7 L1106.5 480.0 M1046.8 545.1 L1033.3 561.4 L1021.1 583.1 L1007.5 602.1 L998.0 620.0 M979.0 575.0 L980.4 595.3 L973.6 620.0 M1098.4 542.4 L1082.1 553.3 L1063.1 569.6 M1120.0 604.8 L1113.3 613.0 M1417.6 352.4 L1413.6 366.0 M1431.2 359.2 L1440.7 361.9 L1458.3 363.3 L1470.6 363.3 L1477.3 366.0 M1413.6 372.8 L1414.9 379.6 M1473.3 402.6 L1481.4 405.3 L1488.2 409.4 L1489.6 414.8 L1485.5 420.3 M1459.7 405.3 L1461.1 412.1 L1457.0 417.5 M1425.8 421.6 L1440.7 420.3 L1447.5 424.3 M1508.5 409.4 L1512.6 418.9 M1459.7 351.1 L1467.8 360.6 L1476.0 353.8" fill="none" stroke="#e69ea8" stroke-width="1.0" stroke-linejoin="round" stroke-linecap="round" stroke-dasharray="5 1.5" opacity="0.85"/>
<path d="M880.1 733.7 L876.7 720.4 L885.7 709.2 L889.0 702.5 L890.1 686.9 L901.3 669.1 L916.9 653.5 L932.5 646.8 L945.9 641.2 L965.9 630.1 M965.9 624.5 L983.7 632.3 L994.9 642.4 L1006.0 647.9 L1019.4 647.9 L1030.6 660.2 L1031.7 671.3 L1035.0 686.9 L1043.9 707.0 L1050.6 729.3 L1059.5 743.8 M1019.4 647.9 L1026.1 637.9 L1030.6 622.3 L1037.2 612.3 M1059.5 743.8 L1072.9 733.7 L1086.3 722.6 L1099.7 713.7 L1117.5 707.0 L1130.0 700.3 M965.9 628.7 L964.7 611.0 M966.4 585.8 L962.1 577.0 L945.8 578.3 L934.4 580.8 M1102.0 520.3 L1119.7 524.1 L1130.0 517.8 M1021.4 647.6 L1028.9 628.7 L1039.0 612.3 M1107.1 536.7 L1119.7 522.8 M1112.1 495.1 L1127.2 500.2 M1280.5 489.3 L1282.8 512.6 M1113.0 496.3 L1134.0 503.3 M1145.6 496.3 L1134.0 504.4 L1129.3 519.5 M1332.3 294.0 L1338.1 296.3 L1340.5 312.6 L1345.1 316.0 L1354.4 309.1 M1340.5 312.6 L1341.6 328.8 L1349.8 340.5 L1353.3 349.8 L1353.3 368.4 L1352.1 373.0 M1323.0 373.0 L1321.9 359.1 L1312.6 356.7 M1353.3 368.4 L1377.7 366.0 L1389.3 368.4 L1403.3 380.0 L1419.5 387.0 L1431.2 387.0 L1447.4 394.0 L1463.7 399.8 L1477.7 394.0 L1489.3 384.7 L1500.9 381.2 L1512.6 380.0 L1526.5 388.1 L1525.3 403.3 L1512.6 428.8 L1500.9 447.4 L1497.4 463.7 L1503.3 484.7 L1494.0 494.0 L1496.3 500.9 L1507.9 512.6 L1512.6 520.0 M1353.3 368.4 L1368.4 363.7 L1382.3 356.7 L1410.2 349.8 L1428.8 342.8 L1438.1 332.3 M1403.3 459.1 L1417.2 473.0 L1431.2 477.7 L1466.0 478.8 L1482.3 491.6 L1496.3 500.9 M1340.5 500.9 L1342.8 510.2 L1340.5 520.0 M1115.1 497.6 L1132.8 503.9 L1144.1 492.6 M1115.1 522.8 L1125.2 517.8 L1132.8 512.8 M1115.1 530.4 L1127.7 517.8 M1130.2 520.3 L1140.3 535.4 L1150.4 560.6 L1154.2 573.2 L1160.5 588.4 L1173.1 597.2 L1188.2 599.7 L1200.8 595.9 L1215.9 585.8 L1231.0 578.3 L1251.2 575.8 L1261.3 558.1 L1273.9 535.4 L1281.5 517.8 L1278.9 495.1 M1281.5 487.6 L1284.0 515.3 L1299.1 517.8 L1319.3 520.3 L1329.3 530.4 L1339.4 540.5 L1347.0 563.2 L1344.5 573.2 L1336.9 585.8 L1331.9 616.1 L1334.4 633.7 L1352.0 641.3 L1367.1 648.9 L1380.0 658.9 M1339.4 500.2 L1341.9 510.2 M1100.0 716.9 L1120.2 706.8 L1142.8 696.7 L1160.5 691.7 L1200.8 694.2 L1205.8 699.3 L1215.9 691.7 L1231.0 687.9 M1471.9 480.0 L1482.0 490.2 L1495.6 500.3 L1509.2 513.9 L1510.8 530.8 L1502.4 547.8 L1485.4 554.6 L1482.0 561.4 L1490.5 588.5 L1488.8 615.6 L1482.0 622.4 L1461.7 629.2 L1444.7 634.2 L1443.1 656.3 L1449.8 663.1 L1448.1 683.4 L1438.0 703.7 L1424.4 712.2 L1414.2 713.9 L1404.1 730.8 L1393.9 735.9 L1395.6 768.1 L1400.7 785.1 L1404.1 805.4 L1414.2 815.6 M1360.0 642.7 L1380.3 659.7 L1400.7 680.0 L1414.2 713.9 M1360.0 730.8 L1373.6 724.1 L1387.1 729.2 M1492.2 493.6 L1502.4 480.0 M1020.4 648.5 L1030.5 658.7 L1032.6 670.9 L1030.5 677.0 L1036.6 691.2 L1044.8 707.5 L1050.9 729.9 L1059.0 744.2 M1059.0 744.2 L1071.2 736.0 L1091.6 719.7 L1114.0 709.6 L1134.3 699.4 L1156.7 692.3 L1179.1 692.3 L1201.5 694.3 L1205.6 700.4 L1211.7 697.3 L1219.8 693.3 L1230.0 689.2 M1329.7 620.0 L1333.8 634.2 L1356.2 640.4 L1370.4 648.5 L1380.0 658.7 M1368.4 725.8 L1380.0 727.9 M1081.4 799.1 L1074.3 812.3 M1041.6 375.7 L1048.5 401.2 L1057.8 398.9 L1065.6 396.6 L1071.8 402.0 L1082.6 416.7 L1088.8 417.5 L1102.8 412.9 L1113.6 416.0 L1116.0 433.0 L1110.5 439.2 L1105.9 447.0 L1088.8 447.0 L1079.5 451.6 L1078.0 458.6 L1090.4 459.4 L1092.7 467.1 L1110.5 462.5 L1126.0 457.8 M1092.7 467.1 L1096.6 470.2 L1093.5 476.4 L1099.7 484.2 M1110.5 496.6 L1122.9 500.0 M1071.8 485.7 L1084.2 474.9 M1154.1 348.5 L1155.7 361.7 L1165.0 367.1 L1174.3 367.9 L1182.0 363.3 L1200.6 360.9 L1223.9 363.3 L1234.7 373.3 L1244.0 378.8 L1253.3 386.5 L1271.9 388.8 L1281.2 385.7 L1290.5 391.2 M1174.3 367.9 L1178.9 378.8 L1191.3 384.2 L1192.9 402.0 L1196.7 417.5 L1189.8 425.3 L1175.8 433.0 L1166.5 442.3 L1154.1 451.6 L1138.6 456.3 L1120.0 462.5 M1191.3 424.5 L1211.5 426.0 L1230.1 422.2 L1247.1 405.1 L1262.6 402.0 L1271.9 392.7 L1275.0 386.5 M1211.5 426.0 L1222.3 451.6 L1234.7 454.7 L1248.7 462.5 L1259.5 471.8 L1273.5 485.7 L1279.7 490.4 L1290.5 479.5 M1152.6 453.2 L1149.5 479.5 L1143.3 495.0 L1140.2 500.0 M1279.7 490.4 L1279.7 500.0 M1280.0 384.9 L1288.1 389.0 L1296.3 394.4 L1304.4 397.8 L1313.9 402.6 L1320.7 405.3 M1304.4 397.8 L1315.3 395.1 L1328.8 393.7 L1331.6 398.5 L1339.7 398.5 L1350.5 393.1 L1355.3 386.3 L1354.6 378.1 L1351.9 370.0 M1322.1 370.0 L1326.1 379.5 L1331.6 386.3 L1330.9 398.5 M1339.7 398.5 L1350.5 405.3 L1358.7 412.1 L1364.1 417.5 M1303.7 399.8 L1303.1 408.0 L1305.8 416.1 L1312.6 417.5 L1320.7 416.1 L1324.8 403.9 L1330.2 399.8 M1311.2 417.5 L1304.4 429.7 L1307.1 440.5 L1312.6 454.1 L1309.8 458.2 L1305.8 465.0 L1293.6 477.2 L1280.0 489.4 L1281.4 510.0 M1312.6 456.8 L1323.4 452.8 L1332.9 450.0 M1322.1 413.4 L1326.1 427.0 L1334.3 440.5 L1342.4 447.3 L1358.7 456.8 L1375.0 458.2 L1402.1 459.5 L1410.2 466.3 L1420.0 474.5 M1337.0 417.5 L1347.8 424.3 L1358.7 431.1 L1376.3 431.1 L1379.0 443.3 L1385.8 447.3 L1400.7 446.0 L1403.5 456.8 M1307.1 465.0 L1308.5 481.2 L1318.0 492.1 L1328.8 496.2 L1339.7 500.2 L1341.1 510.0 M1389.9 370.0 L1399.4 376.8 L1410.2 382.2 L1420.0 386.3 M1008.8 486.1 L993.9 494.9 M1015.0 484.1 L1022.4 489.5 L1021.1 500.4 L1026.5 504.4 L1027.8 511.2 M1027.8 511.2 L1041.4 505.8 L1049.6 503.1 L1050.9 496.3 L1057.7 492.2 L1068.5 486.8 L1078.0 480.0 M1027.8 511.2 L1019.7 519.3 L1008.8 530.2 L1002.1 538.3 L999.3 545.1 L991.2 547.8 L977.6 560.1 L976.3 566.8 L977.6 573.6 M977.6 573.6 L987.1 573.6 L1003.4 564.1 L1019.7 553.9 L1027.8 555.3 L1041.4 543.8 L1055.0 537.0 L1067.2 530.2 L1075.3 520.7 L1082.1 518.7 L1095.7 519.3 L1109.3 522.1 L1120.0 520.7 M1097.0 480.0 L1098.4 492.2 L1106.5 494.9 L1120.0 497.6 M1120.0 523.4 L1109.3 538.3 L1094.3 541.1 L1079.4 547.8 L1071.3 556.0 L1061.8 565.5 L1060.4 581.8 L1060.4 595.3 L1052.3 607.5 L1041.4 610.3 L1030.6 620.0 M1052.3 607.5 L1055.0 614.3 L1060.4 615.7 M977.6 573.6 L965.4 580.4 L960.0 577.7 M965.4 580.4 L966.8 588.5 L964.1 620.0" fill="none" stroke="#f0b078" stroke-width="2.6" stroke-linejoin="round" stroke-linecap="round"/>
</svg>

<!-- status bar -->
<div class="sp" style="left:0px;width:100px;padding-left:6px">MapsID: 3925</div>
<div class="sp" style="left:102px;width:78px">png</div>
<div class="sp" style="left:182px;width:98px">MinZoom: 8</div>
<div class="sp" style="left:282px;width:98px">MaxZoom: 18</div>
<div class="sp" style="left:382px;width:98px">TileSize: 256</div>
<div class="sp" style="left:482px;width:98px">EPSG:3857</div>
<div class="sp" style="left:582px;width:1337px;font-size:13.1px">Longitude=10.294189, Latitude=47.111261, tile=8/135/89.png</div>
</body></html>
